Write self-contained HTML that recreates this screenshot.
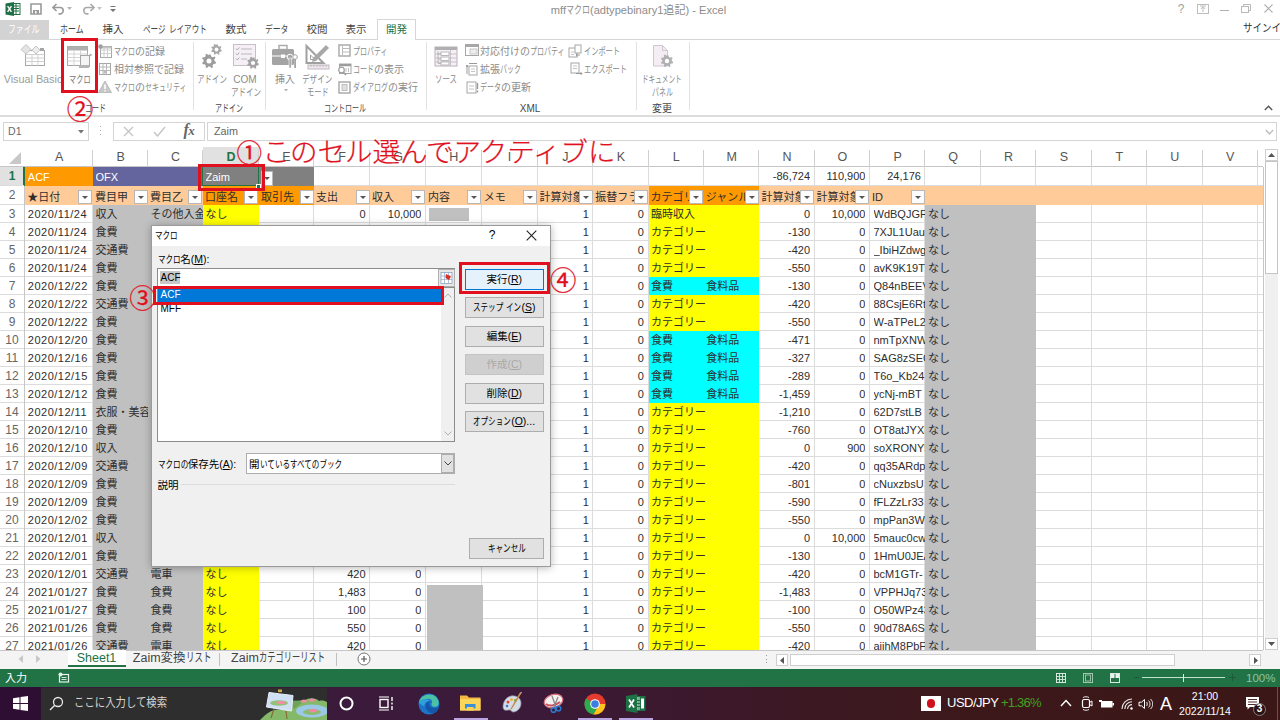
<!DOCTYPE html>
<html lang="ja"><head><meta charset="utf-8"><title>mffマクロ - Excel</title><style>
html,body{margin:0;padding:0}
body{width:1280px;height:720px;overflow:hidden;background:#fff;position:relative;font-family:"Liberation Sans","Noto Sans CJK JP",sans-serif;font-size:11px}
#r{position:absolute;left:0;top:0;width:1280px;height:720px;overflow:hidden}
#r div,#r svg{position:absolute}
#r div{white-space:nowrap}
.t{font-family:"Liberation Sans","Noto Sans CJK JP",sans-serif}
.k{display:inline-block;position:static!important;transform-origin:0 50%}
#r .k{position:static}
.c{overflow:hidden;line-height:18px;font-size:11px;color:#2e2e2e}
.c.r{text-align:right}
.c.d{letter-spacing:.5px}
.c.j{font-size:11px}
.ch{height:20px;line-height:20px;text-align:center;font-size:12.5px;color:#555}
.rh{left:0;width:24px;text-align:center;font-size:12px;color:#666}
.fb{background:#fdfdfd;border:1px solid #b8b8b8;box-sizing:border-box}
.fb i{position:absolute;left:50%;top:50%;margin:-1px 0 0 -3px;border:3px solid transparent;border-top:3.5px solid #555;border-bottom:none;width:0;height:0}
.an{color:#e0101e;font-family:"Noto Sans CJK JP",sans-serif;font-weight:300;-webkit-text-stroke:.25px #e0101e}
u{text-decoration:underline}
</style></head><body><div id="r">
<div style="left:0px;top:0px;width:1280px;height:20px;background:#fff"></div>
<svg style="left:5px;top:2px" width="16" height="14" viewBox="0 0 16 14"><rect x="6" y="1.5" width="9" height="11" fill="#fff" stroke="#1e7145" stroke-width="1"/><path d="M8 4h6M8 6.5h6M8 9h6M11 2v10" stroke="#1e7145" stroke-width="1"/><path d="M0.5 1.5L9 0v14L0.5 12.5Z" fill="#1e7145"/><path d="M2.6 4.2L6.4 9.8M6.4 4.2L2.6 9.8" stroke="#fff" stroke-width="1.4"/></svg>
<svg style="left:30px;top:3px" width="12" height="12" viewBox="0 0 12 12"><path d="M1 1h10v10H1Z" fill="none" stroke="#9a9a9a" stroke-width="1.6"/><rect x="3" y="7" width="6" height="4" fill="#9a9a9a"/><rect x="5" y="8" width="1.5" height="2.5" fill="#fff"/></svg>
<svg style="left:52px;top:3px" width="14" height="12" viewBox="0 0 14 12"><path d="M1.5 4.5h6.5a3.2 3.2 0 0 1 0 6.4H6.5" fill="none" stroke="#9a9a9a" stroke-width="1.6"/><path d="M4.5 1L1 4.5L4.5 8" fill="none" stroke="#9a9a9a" stroke-width="1.6"/></svg>
<svg style="left:67px;top:7px" width="5" height="3"><path d="M0 0h5L2.5 3Z" fill="#b5b5b5"/></svg>
<svg style="left:81px;top:3px" width="14" height="12" viewBox="0 0 14 12"><path d="M12.5 4.5H6a3.2 3.2 0 0 0 0 6.4h1.5" fill="none" stroke="#a9a9a9" stroke-width="1.6"/><path d="M9.5 1L13 4.5L9.5 8" fill="none" stroke="#a9a9a9" stroke-width="1.6"/></svg>
<svg style="left:97px;top:7px" width="5" height="3"><path d="M0 0h5L2.5 3Z" fill="#c5c5c5"/></svg>
<svg style="left:110px;top:6px" width="6" height="6"><path d="M0.5 0.5h5" stroke="#777" stroke-width="1"/><path d="M0 3h6L3 6Z" fill="#777"/></svg>
<div class="t" style="left:438.5px;top:1px;width:400px;height:18px;line-height:18px;text-align:center;color:#8c8c8c;font-size:11.1px">mff<span class="k" style="transform:scaleX(0.720);margin-right:-9.32px">マクロ</span>(adtypebinary1追記) - Excel</div>
<div class="t" style="left:1174px;top:1px;width:14px;height:16px;line-height:16px;text-align:center;color:#a0a0a0;font-size:12px">?</div>
<svg style="left:1197px;top:4px" width="12" height="10" viewBox="0 0 12 10"><rect x=".5" y=".5" width="11" height="9" fill="none" stroke="#bdbdbd"/><path d="M6 8V3M3.8 5L6 2.8L8.2 5M3 2h6" fill="none" stroke="#bdbdbd"/></svg>
<div style="left:1220px;top:10px;width:9px;height:1.2px;background:#b0b0b0"></div>
<svg style="left:1241px;top:4px" width="11" height="10" viewBox="0 0 11 10"><rect x=".5" y="2.5" width="7" height="6" fill="none" stroke="#b8b8b8"/><path d="M2.5 2.5V.5h7v6h-2" fill="none" stroke="#b8b8b8"/></svg>
<svg style="left:1264px;top:4px" width="9" height="9" viewBox="0 0 9 9"><path d="M.5 .5l8 8M8.5 .5l-8 8" stroke="#b0b0b0" stroke-width="1.1"/></svg>
<div style="left:0px;top:20px;width:1280px;height:19px;background:#fff"></div>
<div style="left:0px;top:38.5px;width:1280px;height:1px;background:#d6d6d6"></div>
<div style="left:0px;top:20px;width:48.5px;height:18.5px;background:#d3d3d3"></div>
<div class="t" style="left:0;top:20px;width:48px;height:18px;line-height:18px;text-align:center;color:#fff;font-size:10.5px"><span class="k" style="transform:scaleX(0.750);margin-right:-10.50px">ファイル</span></div>
<div class="t" style="left:54px;top:20px;width:36px;height:18px;line-height:18px;text-align:center;color:#444;font-size:10.5px"><span class="k" style="transform:scaleX(0.760);margin-right:-7.56px">ホーム</span></div>
<div class="t" style="left:96px;top:20px;width:34px;height:18px;line-height:18px;text-align:center;color:#444;font-size:10.5px">挿入</div>
<div class="t" style="left:137px;top:20px;width:76px;height:18px;line-height:18px;text-align:center;color:#444;font-size:10.5px"><span class="k" style="transform:scaleX(0.720);margin-right:-8.82px">ページ</span> <span class="k" style="transform:scaleX(0.720);margin-right:-14.70px">レイアウト</span></div>
<div class="t" style="left:219px;top:20px;width:34px;height:18px;line-height:18px;text-align:center;color:#444;font-size:10.5px">数式</div>
<div class="t" style="left:258px;top:20px;width:38px;height:18px;line-height:18px;text-align:center;color:#444;font-size:10.5px"><span class="k" style="transform:scaleX(0.740);margin-right:-8.19px">データ</span></div>
<div class="t" style="left:300px;top:20px;width:34px;height:18px;line-height:18px;text-align:center;color:#444;font-size:10.5px">校閲</div>
<div class="t" style="left:339px;top:20px;width:34px;height:18px;line-height:18px;text-align:center;color:#444;font-size:10.5px">表示</div>
<div style="left:377px;top:18.5px;width:38.5px;height:21px;background:#fff;border:1px solid #d6d6d6;border-bottom:none;box-sizing:border-box"></div>
<div class="t" style="left:379px;top:20px;width:35px;height:18px;line-height:18px;text-align:center;color:#217346;font-size:10.5px">開発</div>
<div class="t" style="left:1243px;top:20px;width:60px;height:17px;line-height:17px;color:#333;font-size:11px"><span class="k" style="transform:scaleX(0.860);margin-right:-7.70px">サインイン</span></div>
<div style="left:0px;top:39.5px;width:1280px;height:76px;background:#fff"></div>
<div style="left:0px;top:115px;width:1280px;height:1.5px;background:#dcdcdc"></div>
<div style="left:192.5px;top:42px;width:1px;height:68px;background:#e2e2e2"></div>
<div style="left:265px;top:42px;width:1px;height:68px;background:#e2e2e2"></div>
<div style="left:425.5px;top:42px;width:1px;height:68px;background:#e2e2e2"></div>
<div style="left:635.5px;top:42px;width:1px;height:68px;background:#e2e2e2"></div>
<div style="left:688.5px;top:42px;width:1px;height:68px;background:#e2e2e2"></div>
<div class="t" style="left:70px;top:101.5px;height:14px;line-height:14px;color:#484848;font-size:10px;width:50px;text-align:center;"><span class="k" style="transform:scaleX(0.700);margin-right:-9.00px">コード</span></div>
<div class="t" style="left:204px;top:101.5px;height:14px;line-height:14px;color:#484848;font-size:10px;width:50px;text-align:center;"><span class="k" style="transform:scaleX(0.700);margin-right:-12.00px">アドイン</span></div>
<div class="t" style="left:310px;top:101.5px;height:14px;line-height:14px;color:#484848;font-size:10px;width:70px;text-align:center;"><span class="k" style="transform:scaleX(0.700);margin-right:-18.00px">コントロール</span></div>
<div class="t" style="left:505px;top:101.5px;height:14px;line-height:14px;color:#484848;font-size:10px;width:50px;text-align:center;">XML</div>
<div class="t" style="left:637px;top:101.5px;height:14px;line-height:14px;color:#484848;font-size:10px;width:50px;text-align:center;">変更</div>
<svg style="left:20px;top:43px" width="27" height="25" viewBox="0 0 27 25"><rect x="5.500" y="7.500" width="19" height="15" fill="#fff" stroke="#a6a6a6"/><path d="M5.500 11.500h19M5.500 15h19M5.500 18.500h19M12 11.500v11M18 11.500v11" stroke="#d0d0d0"/><rect x="20" y="5" width="4" height="3" fill="#a6a6a6"/><path d="M6 1.500l5 5-5 4.500-5-4.500Z" fill="#e4e4e4" stroke="#c4c4c4"/><path d="M16 3l4 4-4 4-4-4Z" fill="#ececec" stroke="#c4c4c4"/></svg>
<div class="t" style="left:3px;top:72px;height:14px;line-height:14px;color:#9a9a9a;font-size:10.8px;width:60px;text-align:center;">Visual Basic</div>
<svg style="left:66px;top:45px" width="27" height="25" viewBox="0 0 27 25"><rect x="1.500" y="1.500" width="20" height="19" fill="#fff" stroke="#a6a6a6"/><rect x="1.500" y="1.500" width="20" height="4" fill="#b0b0b0"/><path d="M1.500 9h20M1.500 12.500h20M1.500 16h20M8 5.500v15M14.500 5.500v15" stroke="#d4d4d4"/><rect x="14.500" y="10.500" width="9" height="11" fill="#f4f4f4" stroke="#a6a6a6"/><rect x="13" y="20" width="10" height="3" fill="#b4b4b4"/><circle cx="24.500" cy="10" r="1.300" fill="#b4b4b4"/></svg>
<div class="t" style="left:62px;top:72.5px;height:14px;line-height:14px;color:#777;font-size:10px;width:36px;text-align:center;"><span class="k" style="transform:scaleX(0.720);margin-right:-8.40px">マクロ</span></div>
<svg style="left:98px;top:44px" width="14" height="14" viewBox="0 0 14 14"><rect x="2.500" y="2.500" width="11" height="11" fill="#fff" stroke="#a6a6a6"/><path d="M2.500 6h11M2.500 9.500h11M6 2.500v11M9.500 2.500v11" stroke="#d0d0d0"/><rect x="2.500" y="2.500" width="11" height="2" fill="#c4c4c4"/><circle cx="2.500" cy="2.500" r="2.300" fill="#a0a0a0"/></svg>
<div class="t" style="left:114px;top:45px;height:14px;line-height:14px;color:#8a8a8a;font-size:10px;"><span class="k" style="transform:scaleX(0.700);margin-right:-9.00px">マクロ</span>の記録</div>
<svg style="left:98px;top:62px" width="14" height="14" viewBox="0 0 14 14"><rect x="1.500" y="1.500" width="11" height="11" fill="#fff" stroke="#a6a6a6"/><path d="M1.500 5h11M1.500 8.500h11M5 1.500v11M8.500 1.500v11" stroke="#b8b8b8"/><rect x="5.500" y="8.500" width="3" height="3" fill="#bbb"/></svg>
<div class="t" style="left:114px;top:63px;height:14px;line-height:14px;color:#8a8a8a;font-size:10px;">相対参照で記録</div>
<svg style="left:98px;top:80px" width="14" height="13" viewBox="0 0 14 13"><path d="M7 1L13.500 12.500H.5Z" fill="#c8c8c8" stroke="#bcbcbc"/><path d="M7 4.500v4.500M7 10.200v1.400" stroke="#fff" stroke-width="1.600"/></svg>
<div class="t" style="left:114px;top:81px;height:14px;line-height:14px;color:#8a8a8a;font-size:10px;"><span class="k" style="transform:scaleX(0.700);margin-right:-9.00px">マクロ</span>の<span class="k" style="transform:scaleX(0.700);margin-right:-18.00px">セキュリティ</span></div>
<svg style="left:200px;top:43px" width="28" height="28" viewBox="0 0 28 28"><g transform="translate(9,18) scale(1.25)"><path d="M0 -5.200L1.300 -5.200L1.700 -3.700L3 -3L4.400 -3.700L5.200 -2.600L4.200 -1.400L4.400 0L5.600 .8L5.200 2.200L3.700 2.300L2.800 3.400L3.200 4.900L1.900 5.500L.9 4.300L-.6 4.300L-1.500 5.500L-2.800 5L-2.500 3.500L-3.500 2.500L-5 2.600L-5.500 1.300L-4.300 .4L-4.300 -1L-5.500 -1.900L-5 -3.100L-3.500 -3L-2.600 -4L-2.900 -5.400L-1.600 -5.900L-.700 -4.700Z" fill="#9c9c9c"/><circle r="2" fill="#fff"/></g><g transform="translate(16.5,6.5) scale(.95)"><path d="M0 -5.200L1.300 -5.200L1.700 -3.700L3 -3L4.400 -3.700L5.200 -2.600L4.200 -1.400L4.400 0L5.600 .8L5.200 2.200L3.700 2.300L2.800 3.400L3.200 4.900L1.900 5.500L.9 4.300L-.6 4.300L-1.500 5.500L-2.800 5L-2.500 3.500L-3.500 2.500L-5 2.600L-5.500 1.300L-4.300 .4L-4.300 -1L-5.500 -1.900L-5 -3.100L-3.500 -3L-2.600 -4L-2.900 -5.400L-1.600 -5.900L-.700 -4.700Z" fill="#a8a8a8"/><circle r="2" fill="#fff"/></g></svg>
<div class="t" style="left:194px;top:72.5px;height:14px;line-height:14px;color:#8a8a8a;font-size:10px;width:36px;text-align:center;"><span class="k" style="transform:scaleX(0.750);margin-right:-10.00px">アドイン</span></div>
<svg style="left:232px;top:43px" width="28" height="28" viewBox="0 0 28 28"><rect x="1.500" y="1.500" width="22" height="21" fill="#f6f0f6" stroke="#c8c0c8"/><path d="M9 6h11M9 11h11M9 16h6" stroke="#b8b8b8"/><path d="M4 5.500l1.300 1.500 2-2.500M4 10.500l1.300 1.500 2-2.500M4 15.500l1.300 1.500 2-2.500" fill="none" stroke="#aaa"/><g transform="translate(21,20) scale(1.05)"><path d="M0 -5.200L1.300 -5.200L1.700 -3.700L3 -3L4.400 -3.700L5.200 -2.600L4.200 -1.400L4.400 0L5.600 .8L5.200 2.200L3.700 2.300L2.800 3.400L3.200 4.900L1.900 5.500L.9 4.300L-.6 4.300L-1.500 5.500L-2.800 5L-2.500 3.500L-3.500 2.500L-5 2.600L-5.500 1.300L-4.300 .4L-4.300 -1L-5.500 -1.900L-5 -3.100L-3.500 -3L-2.600 -4L-2.900 -5.400L-1.600 -5.900L-.700 -4.700Z" fill="#a4a4a4"/><circle r="2" fill="#fff"/></g></svg>
<div class="t" style="left:229px;top:72.5px;height:14px;line-height:14px;color:#8a8a8a;font-size:10px;width:32px;text-align:center;">COM</div>
<div class="t" style="left:227.5px;top:85.5px;height:14px;line-height:14px;color:#8a8a8a;font-size:10px;width:36px;text-align:center;"><span class="k" style="transform:scaleX(0.750);margin-right:-10.00px">アドイン</span></div>
<svg style="left:271px;top:44px" width="28" height="26" viewBox="0 0 28 26"><rect x="8" y="1.500" width="8" height="4" fill="none" stroke="#a8a8a8" stroke-width="1.400"/><rect x="1" y="5" width="22" height="16" rx="1.500" fill="#a4a4a4"/><path d="M1 12h22" stroke="#fff" stroke-width="1"/><rect x="10" y="10.500" width="4" height="3.500" fill="#fff"/><circle cx="19" cy="13" r="2.800" fill="#a4a4a4" stroke="#fff"/><rect x="18" y="14" width="2.200" height="10" fill="#a4a4a4" stroke="#fff" stroke-width=".6"/><circle cx="24" cy="13" r="2.300" fill="#fff" stroke="#a4a4a4"/><rect x="23.200" y="15" width="1.800" height="9" fill="#a4a4a4"/></svg>
<div class="t" style="left:268px;top:72.5px;height:14px;line-height:14px;color:#8a8a8a;font-size:10px;width:34px;text-align:center;">挿入</div>
<svg style="left:284px;top:89px" width="4" height="3"><path d="M0 0h4L2 2.500Z" fill="#b0b0b0"/></svg>
<svg style="left:304px;top:43px" width="28" height="28" viewBox="0 0 28 28"><path d="M2.500 3v17h17Z" fill="none" stroke="#a0a0a0" stroke-width="2"/><path d="M6.500 12v4.500H11Z" fill="#fff" stroke="#a0a0a0"/><path d="M22 2l3 3L12 18l-4 1 1-4Z" fill="#a8a8a8"/><rect x="4" y="22" width="21" height="4" fill="#efe8ef" stroke="#c0b8c0"/><path d="M7 22v2M10 22v2M13 22v2M16 22v2M19 22v2M22 22v2" stroke="#b0b0b0" stroke-width=".8"/></svg>
<div class="t" style="left:299.5px;top:72.5px;height:14px;line-height:14px;color:#8a8a8a;font-size:10px;width:36px;text-align:center;"><span class="k" style="transform:scaleX(0.760);margin-right:-9.60px">デザイン</span></div>
<div class="t" style="left:300px;top:85.5px;height:14px;line-height:14px;color:#8a8a8a;font-size:10px;width:36px;text-align:center;"><span class="k" style="transform:scaleX(0.720);margin-right:-8.40px">モード</span></div>
<svg style="left:338px;top:44px" width="13" height="13" viewBox="0 0 13 13"><rect x="1" y="1" width="11" height="11" fill="#fff" stroke="#a6a6a6" stroke-width="1.400"/><path d="M4.500 1v11M4.500 4.500H12M4.500 8H12" stroke="#bbb"/></svg>
<div class="t" style="left:353px;top:45px;height:14px;line-height:14px;color:#8a8a8a;font-size:10px;"><span class="k" style="transform:scaleX(0.700);margin-right:-15.00px">プロパティ</span></div>
<svg style="left:337px;top:63px" width="15" height="13" viewBox="0 0 15 13"><rect x="2.500" y="1" width="11.500" height="9.500" fill="#fff" stroke="#a6a6a6"/><rect x="2.500" y="1" width="11.500" height="2.200" fill="#9c9c9c"/><path d="M9 5v4M11.500 5v4" stroke="#c0c0c0"/><circle cx="4.500" cy="7" r="2.800" fill="#fff" stroke="#9c9c9c" stroke-width="1.200"/><path d="M6.500 9.200L9 12" stroke="#9c9c9c" stroke-width="1.500"/></svg>
<div class="t" style="left:353px;top:63px;height:14px;line-height:14px;color:#8a8a8a;font-size:10px;"><span class="k" style="transform:scaleX(0.700);margin-right:-9.00px">コード</span>の表示</div>
<svg style="left:338px;top:81px" width="13" height="13" viewBox="0 0 13 13"><rect x="1" y="1" width="11" height="11" fill="#fff" stroke="#a6a6a6" stroke-width="1.400"/><rect x="4" y="3.500" width="5" height="6" fill="#e0e0e0" stroke="#b4b4b4" stroke-width=".8"/></svg>
<div class="t" style="left:353px;top:81px;height:14px;line-height:14px;color:#8a8a8a;font-size:10px;"><span class="k" style="transform:scaleX(0.700);margin-right:-15.00px">ダイアログ</span>の実行</div>
<svg style="left:434px;top:46px" width="24" height="21" viewBox="0 0 24 21"><rect x="1" y="1" width="22" height="19" fill="#f6f0f6" stroke="#b8b0b8"/><rect x="1" y="1" width="22" height="3" fill="#b0b0b0"/><path d="M1 8h22M1 12h22M1 16h22M16.500 4v16" stroke="#c8c0c8"/><rect x="7" y="6" width="8" height="3.500" fill="#fff" stroke="#aaa" stroke-width=".8"/><rect x="7" y="11" width="8" height="3.500" fill="#fff" stroke="#aaa" stroke-width=".8"/><rect x="7" y="16" width="8" height="3" fill="#fff" stroke="#aaa" stroke-width=".8"/><path d="M4 5v12.500h3M4 8h3M4 13h3" fill="none" stroke="#aaa" stroke-width=".8"/></svg>
<div class="t" style="left:428px;top:72.5px;height:14px;line-height:14px;color:#8a8a8a;font-size:10px;width:36px;text-align:center;"><span class="k" style="transform:scaleX(0.740);margin-right:-7.80px">ソース</span></div>
<svg style="left:465px;top:44px" width="14" height="12" viewBox="0 0 14 12"><rect x=".5" y=".5" width="13" height="11" fill="#fff" stroke="#a6a6a6"/><rect x=".5" y=".5" width="13" height="2.500" fill="#a8a8a8"/><rect x="5" y="5" width="7" height="5" fill="#eee" stroke="#bbb" stroke-width=".8"/></svg>
<div class="t" style="left:480px;top:45px;height:14px;line-height:14px;color:#8a8a8a;font-size:10px;">対応付けの<span class="k" style="transform:scaleX(0.700);margin-right:-15.00px">プロパティ</span></div>
<svg style="left:466px;top:62px" width="13" height="14" viewBox="0 0 13 14"><rect x="3" y="4" width="8" height="9" fill="#fff" stroke="#a6a6a6"/><path d="M1 3v9M1 3l-1 2M1 3l1 2M3 1.500h8" stroke="#999" stroke-width="1"/><path d="M5 7h4M5 9.500h4" stroke="#c4c4c4"/></svg>
<div class="t" style="left:480px;top:63px;height:14px;line-height:14px;color:#8a8a8a;font-size:10px;">拡張<span class="k" style="transform:scaleX(0.700);margin-right:-9.00px">パック</span></div>
<svg style="left:466px;top:80px" width="13" height="14" viewBox="0 0 13 14"><rect x="1" y="2" width="9" height="11" fill="#fff" stroke="#a6a6a6"/><path d="M3 6h5M3 9h5" stroke="#c4c4c4"/><path d="M11.500 3v6M11.500 10.500v2" stroke="#999" stroke-width="1.400"/></svg>
<div class="t" style="left:480px;top:81px;height:14px;line-height:14px;color:#8a8a8a;font-size:10px;"><span class="k" style="transform:scaleX(0.700);margin-right:-9.00px">データ</span>の更新</div>
<svg style="left:568px;top:44px" width="14" height="14" viewBox="0 0 14 14"><rect x="1" y="4" width="8" height="9" fill="#fff" stroke="#a6a6a6"/><rect x="7" y="1" width="6" height="8" fill="#fff" stroke="#a6a6a6"/><path d="M3 8h3M3 10.500h3" stroke="#c4c4c4"/><path d="M12 11H8M9.500 9.500L8 11l1.500 1.500" fill="none" stroke="#999"/></svg>
<div class="t" style="left:584px;top:45px;height:14px;line-height:14px;color:#8a8a8a;font-size:10px;"><span class="k" style="transform:scaleX(0.720);margin-right:-14.00px">インポート</span></div>
<svg style="left:570px;top:62px" width="14" height="14" viewBox="0 0 14 14"><rect x="1" y="1" width="8" height="10" fill="#fff" stroke="#a6a6a6"/><path d="M3 4h4M3 6.500h4" stroke="#c4c4c4"/><path d="M6 11.500h6M10.500 10l1.500 1.500-1.500 1.500" fill="none" stroke="#999"/></svg>
<div class="t" style="left:584px;top:63px;height:14px;line-height:14px;color:#8a8a8a;font-size:10px;"><span class="k" style="transform:scaleX(0.720);margin-right:-16.80px">エクスポート</span></div>
<svg style="left:652px;top:44px" width="22" height="26" viewBox="0 0 22 26"><path d="M1.500 1.500h9l5 5V22h-14Z" fill="#f4eef4" stroke="#cfc6cf"/><path d="M10.500 1.500v5h5" fill="none" stroke="#cfc6cf"/><g transform="translate(15,17) scale(1.1)"><path d="M0 -5.200L1.300 -5.200L1.700 -3.700L3 -3L4.400 -3.700L5.200 -2.600L4.200 -1.400L4.400 0L5.600 .8L5.200 2.200L3.700 2.300L2.800 3.400L3.200 4.900L1.900 5.500L.9 4.300L-.6 4.300L-1.500 5.500L-2.800 5L-2.500 3.500L-3.500 2.500L-5 2.600L-5.500 1.300L-4.300 .4L-4.300 -1L-5.500 -1.900L-5 -3.100L-3.500 -3L-2.600 -4L-2.900 -5.400L-1.600 -5.900L-.700 -4.700Z" fill="#b0b0b0"/><circle r="2" fill="#fff"/></g></svg>
<div class="t" style="left:637px;top:72.5px;height:14px;line-height:14px;color:#8a8a8a;font-size:10px;width:50px;text-align:center;"><span class="k" style="transform:scaleX(0.660);margin-right:-20.40px">ドキュメント</span></div>
<div class="t" style="left:642px;top:85.5px;height:14px;line-height:14px;color:#8a8a8a;font-size:10px;width:40px;text-align:center;"><span class="k" style="transform:scaleX(0.700);margin-right:-9.00px">パネル</span></div>
<svg style="left:1264px;top:105px" width="9" height="6"><path d="M.8 5L4.500 1.200L8.200 5" fill="none" stroke="#555" stroke-width="1.300"/></svg>
<div style="left:0px;top:116.5px;width:1280px;height:30.5px;background:#fff"></div>
<div style="left:3px;top:122px;width:85.5px;height:18.5px;background:#fff;border:1px solid #d4d4d4;box-sizing:border-box"></div>
<div class="t" style="left:8px;top:123px;height:17px;line-height:17px;color:#6a6a6a;font-size:10.6px">D1</div>
<svg style="left:78px;top:129.500px" width="6" height="4"><path d="M0 0h6L3 3.500Z" fill="#777"/></svg>
<div style="left:100px;top:126px;width:1.2px;height:1.2px;background:#aaa"></div>
<div style="left:100px;top:130px;width:1.2px;height:1.2px;background:#aaa"></div>
<div style="left:100px;top:134px;width:1.2px;height:1.2px;background:#aaa"></div>
<div style="left:113px;top:122px;width:91.5px;height:18.5px;background:#fff;border:1px solid #d4d4d4;box-sizing:border-box"></div>
<svg style="left:123px;top:126px" width="11" height="11"><path d="M1 1l9 9M10 1l-9 9" stroke="#c4c4c4" stroke-width="1.300"/></svg>
<svg style="left:153px;top:126px" width="13" height="11"><path d="M1 6l3.500 4L12 1" fill="none" stroke="#c4c4c4" stroke-width="1.400"/></svg>
<div style="left:183.5px;top:121px;height:19px;line-height:19px;color:#666;font:italic bold 16px 'Liberation Serif',serif;"><span style="letter-spacing:-.5px">f</span><span style="font-size:13px">x</span></div>
<div style="left:207px;top:122px;width:1070px;height:18.5px;background:#fff;border:1px solid #d4d4d4;box-sizing:border-box"></div>
<div class="t" style="left:214px;top:123px;height:17px;line-height:17px;color:#666;font-size:10.8px">Zaim</div>
<svg style="left:1265px;top:129px" width="9" height="6"><path d="M.8 1L4.500 4.800L8.200 1" fill="none" stroke="#c0c0c0" stroke-width="1.500"/></svg>
<div style="left:0px;top:147px;width:1263px;height:503px;background:#fff"></div>
<div style="left:92px;top:167px;width:1px;height:483px;background:#dcdcdc"></div>
<div style="left:147.1px;top:167px;width:1px;height:483px;background:#dcdcdc"></div>
<div style="left:202px;top:167px;width:1px;height:483px;background:#dcdcdc"></div>
<div style="left:257.9px;top:167px;width:1px;height:483px;background:#dcdcdc"></div>
<div style="left:313.1px;top:167px;width:1px;height:483px;background:#dcdcdc"></div>
<div style="left:369.1px;top:167px;width:1px;height:483px;background:#dcdcdc"></div>
<div style="left:425px;top:167px;width:1px;height:483px;background:#dcdcdc"></div>
<div style="left:480.7px;top:167px;width:1px;height:483px;background:#dcdcdc"></div>
<div style="left:536.5px;top:167px;width:1px;height:483px;background:#dcdcdc"></div>
<div style="left:592.3px;top:167px;width:1px;height:483px;background:#dcdcdc"></div>
<div style="left:647.5px;top:167px;width:1px;height:483px;background:#dcdcdc"></div>
<div style="left:702.8px;top:167px;width:1px;height:483px;background:#dcdcdc"></div>
<div style="left:758.4px;top:167px;width:1px;height:483px;background:#dcdcdc"></div>
<div style="left:813.6px;top:167px;width:1px;height:483px;background:#dcdcdc"></div>
<div style="left:869px;top:167px;width:1px;height:483px;background:#dcdcdc"></div>
<div style="left:924.4px;top:167px;width:1px;height:483px;background:#dcdcdc"></div>
<div style="left:979.8px;top:167px;width:1px;height:483px;background:#dcdcdc"></div>
<div style="left:1035.2px;top:167px;width:1px;height:483px;background:#dcdcdc"></div>
<div style="left:1090.5px;top:167px;width:1px;height:483px;background:#dcdcdc"></div>
<div style="left:1146px;top:167px;width:1px;height:483px;background:#dcdcdc"></div>
<div style="left:1201.5px;top:167px;width:1px;height:483px;background:#dcdcdc"></div>
<div style="left:1256.8px;top:167px;width:1px;height:483px;background:#dcdcdc"></div>
<div style="left:25px;top:185px;width:1238px;height:1px;background:#dcdcdc"></div>
<div style="left:25px;top:203.9px;width:1238px;height:1px;background:#dcdcdc"></div>
<div style="left:25px;top:221.9px;width:1238px;height:1px;background:#dcdcdc"></div>
<div style="left:25px;top:239.9px;width:1238px;height:1px;background:#dcdcdc"></div>
<div style="left:25px;top:257.9px;width:1238px;height:1px;background:#dcdcdc"></div>
<div style="left:25px;top:275.9px;width:1238px;height:1px;background:#dcdcdc"></div>
<div style="left:25px;top:293.9px;width:1238px;height:1px;background:#dcdcdc"></div>
<div style="left:25px;top:311.9px;width:1238px;height:1px;background:#dcdcdc"></div>
<div style="left:25px;top:329.9px;width:1238px;height:1px;background:#dcdcdc"></div>
<div style="left:25px;top:347.9px;width:1238px;height:1px;background:#dcdcdc"></div>
<div style="left:25px;top:365.9px;width:1238px;height:1px;background:#dcdcdc"></div>
<div style="left:25px;top:383.9px;width:1238px;height:1px;background:#dcdcdc"></div>
<div style="left:25px;top:401.9px;width:1238px;height:1px;background:#dcdcdc"></div>
<div style="left:25px;top:419.9px;width:1238px;height:1px;background:#dcdcdc"></div>
<div style="left:25px;top:437.9px;width:1238px;height:1px;background:#dcdcdc"></div>
<div style="left:25px;top:455.9px;width:1238px;height:1px;background:#dcdcdc"></div>
<div style="left:25px;top:473.9px;width:1238px;height:1px;background:#dcdcdc"></div>
<div style="left:25px;top:491.9px;width:1238px;height:1px;background:#dcdcdc"></div>
<div style="left:25px;top:509.9px;width:1238px;height:1px;background:#dcdcdc"></div>
<div style="left:25px;top:527.9px;width:1238px;height:1px;background:#dcdcdc"></div>
<div style="left:25px;top:545.9px;width:1238px;height:1px;background:#dcdcdc"></div>
<div style="left:25px;top:563.9px;width:1238px;height:1px;background:#dcdcdc"></div>
<div style="left:25px;top:581.9px;width:1238px;height:1px;background:#dcdcdc"></div>
<div style="left:25px;top:599.9px;width:1238px;height:1px;background:#dcdcdc"></div>
<div style="left:25px;top:617.9px;width:1238px;height:1px;background:#dcdcdc"></div>
<div style="left:25px;top:635.9px;width:1238px;height:1px;background:#dcdcdc"></div>
<div style="left:25.3px;top:167px;width:67.7px;height:19px;background:#ff9900"></div>
<div style="left:93px;top:167px;width:110px;height:19px;background:#64649e"></div>
<div style="left:203px;top:167px;width:111.1px;height:19px;background:#808080"></div>
<div style="left:25px;top:186.3px;width:1238px;height:18.7px;background:#ffcc99"></div>
<div style="left:203px;top:186.3px;width:111.1px;height:18.6px;background:#ff9900"></div>
<div style="left:648.5px;top:186.3px;width:110.9px;height:18.6px;background:#ff9900"></div>
<div style="left:93px;top:204.9px;width:110px;height:445.1px;background:#c0c0c0"></div>
<div style="left:203px;top:204.9px;width:55.9px;height:445.1px;background:#ffff00"></div>
<div style="left:648.5px;top:204.9px;width:110.9px;height:445.1px;background:#ffff00"></div>
<div style="left:648.5px;top:276.9px;width:110.9px;height:18px;background:#00ffff"></div>
<div style="left:648.5px;top:330.9px;width:110.9px;height:18px;background:#00ffff"></div>
<div style="left:648.5px;top:348.9px;width:110.9px;height:18px;background:#00ffff"></div>
<div style="left:648.5px;top:366.9px;width:110.9px;height:18px;background:#00ffff"></div>
<div style="left:648.5px;top:384.9px;width:110.9px;height:18px;background:#00ffff"></div>
<div style="left:925.4px;top:204.9px;width:110.8px;height:445.1px;background:#c0c0c0"></div>
<div style="left:428.5px;top:207.5px;width:40px;height:13.5px;background:#c0c0c0"></div>
<div style="left:427px;top:585px;width:55.8px;height:65px;background:#c0c0c0"></div>
<div class="c l" style="left:27.8px;top:167px;width:65.2px;height:19px;color:#fff;line-height:20px">ACF</div>
<div class="c l" style="left:95.5px;top:167px;width:52.6px;height:19px;color:#fff;line-height:20px">OFX</div>
<div class="c l" style="left:205.5px;top:167px;width:53.4px;height:19px;color:#fff;line-height:20px">Zaim</div>
<div class="c r" style="left:761.9px;top:167px;width:48.2px;height:19px;">-86,724</div>
<div class="c r" style="left:817.1px;top:167px;width:48.4px;height:19px;">110,900</div>
<div class="c r" style="left:872.5px;top:167px;width:48.4px;height:19px;">24,176</div>
<div class="c j" style="left:27.3px;top:186.3px;width:51.1px;height:18.7px;line-height:22px">★日付</div>
<div class="fb" style="left:78.4px;top:190.3px;width:14px;height:13.4px"><i></i></div>
<div class="c j" style="left:95px;top:186.3px;width:38.5px;height:18.7px;line-height:22px">費目甲</div>
<div class="fb" style="left:133.5px;top:190.3px;width:14px;height:13.4px"><i></i></div>
<div class="c j" style="left:150.1px;top:186.3px;width:38.3px;height:18.7px;line-height:22px">費目乙</div>
<div class="fb" style="left:188.4px;top:190.3px;width:14px;height:13.4px"><i></i></div>
<div class="c j" style="left:205px;top:186.3px;width:39.3px;height:18.7px;line-height:22px">口座名</div>
<div class="fb" style="left:244.3px;top:190.3px;width:14px;height:13.4px"><i></i></div>
<div class="c j" style="left:260.9px;top:186.3px;width:38.6px;height:18.7px;line-height:22px">取引先</div>
<div class="fb" style="left:299.5px;top:190.3px;width:14px;height:13.4px"><i></i></div>
<div class="c j" style="left:316.1px;top:186.3px;width:39.4px;height:18.7px;line-height:22px">支出</div>
<div class="fb" style="left:355.5px;top:190.3px;width:14px;height:13.4px"><i></i></div>
<div class="c j" style="left:372.1px;top:186.3px;width:39.3px;height:18.7px;line-height:22px">収入</div>
<div class="fb" style="left:411.4px;top:190.3px;width:14px;height:13.4px"><i></i></div>
<div class="c j" style="left:428px;top:186.3px;width:39.1px;height:18.7px;line-height:22px">内容</div>
<div class="fb" style="left:467.1px;top:190.3px;width:14px;height:13.4px"><i></i></div>
<div class="c j" style="left:483.7px;top:186.3px;width:39.2px;height:18.7px;line-height:22px">メモ</div>
<div class="fb" style="left:522.9px;top:190.3px;width:14px;height:13.4px"><i></i></div>
<div class="c j" style="left:539.5px;top:186.3px;width:39.2px;height:18.7px;line-height:22px">計算対象</div>
<div class="fb" style="left:578.7px;top:190.3px;width:14px;height:13.4px"><i></i></div>
<div class="c j" style="left:595.3px;top:186.3px;width:38.6px;height:18.7px;line-height:22px">振替フラグ</div>
<div class="fb" style="left:633.9px;top:190.3px;width:14px;height:13.4px"><i></i></div>
<div class="c j" style="left:650.5px;top:186.3px;width:38.7px;height:18.7px;line-height:22px">カテゴリ</div>
<div class="fb" style="left:689.2px;top:190.3px;width:14px;height:13.4px"><i></i></div>
<div class="c j" style="left:705.8px;top:186.3px;width:39px;height:18.7px;line-height:22px">ジャンル</div>
<div class="fb" style="left:744.8px;top:190.3px;width:14px;height:13.4px"><i></i></div>
<div class="c j" style="left:761.4px;top:186.3px;width:38.6px;height:18.7px;line-height:22px">計算対象</div>
<div class="fb" style="left:800px;top:190.3px;width:14px;height:13.4px"><i></i></div>
<div class="c j" style="left:816.6px;top:186.3px;width:38.8px;height:18.7px;line-height:22px">計算対象</div>
<div class="fb" style="left:855.4px;top:190.3px;width:14px;height:13.4px"><i></i></div>
<div class="c j" style="left:872px;top:186.3px;width:38.8px;height:18.7px;line-height:22px">ID</div>
<div class="fb" style="left:910.8px;top:190.3px;width:14px;height:13.4px"><i></i></div>
<div class="fb" style="left:260.7px;top:170.8px;width:12.3px;height:14.8px"><i></i></div>
<div class="c l d" style="left:27.8px;top:204.9px;width:65.2px;height:18px;">2020/11/24</div>
<div class="c j" style="left:95.5px;top:204.9px;width:52.6px;height:18px;">収入</div>
<div class="c j" style="left:150.6px;top:204.9px;width:52.4px;height:18px;">その他入金</div>
<div class="c j" style="left:205.5px;top:204.9px;width:53.4px;height:18px;">なし</div>
<div class="c r" style="left:316.6px;top:204.9px;width:49px;height:18px;">0</div>
<div class="c r" style="left:372.6px;top:204.9px;width:48.9px;height:18px;">10,000</div>
<div class="c r" style="left:540px;top:204.9px;width:48.8px;height:18px;">1</div>
<div class="c r" style="left:595.8px;top:204.9px;width:48.2px;height:18px;">0</div>
<div class="c j" style="left:651px;top:204.9px;width:52.8px;height:18px;">臨時収入</div>
<div class="c r" style="left:761.9px;top:204.9px;width:48.2px;height:18px;">0</div>
<div class="c r" style="left:817.1px;top:204.9px;width:48.4px;height:18px;">10,000</div>
<div class="c l" style="left:873.5px;top:204.9px;width:51.9px;height:18px;">WdBQJGFx</div>
<div class="c j" style="left:927.9px;top:204.9px;width:52.9px;height:18px;">なし</div>
<div class="c l d" style="left:27.8px;top:222.9px;width:65.2px;height:18px;">2020/11/24</div>
<div class="c j" style="left:95.5px;top:222.9px;width:52.6px;height:18px;">食費</div>
<div class="c r" style="left:540px;top:222.9px;width:48.8px;height:18px;">1</div>
<div class="c r" style="left:595.8px;top:222.9px;width:48.2px;height:18px;">0</div>
<div class="c j" style="left:651px;top:222.9px;width:108.4px;height:18px;">カテゴリー</div>
<div class="c r" style="left:761.9px;top:222.9px;width:48.2px;height:18px;">-130</div>
<div class="c r" style="left:817.1px;top:222.9px;width:48.4px;height:18px;">0</div>
<div class="c l" style="left:873.5px;top:222.9px;width:51.9px;height:18px;">7XJL1Uau</div>
<div class="c j" style="left:927.9px;top:222.9px;width:52.9px;height:18px;">なし</div>
<div class="c l d" style="left:27.8px;top:240.9px;width:65.2px;height:18px;">2020/11/24</div>
<div class="c j" style="left:95.5px;top:240.9px;width:52.6px;height:18px;">交通費</div>
<div class="c r" style="left:540px;top:240.9px;width:48.8px;height:18px;">1</div>
<div class="c r" style="left:595.8px;top:240.9px;width:48.2px;height:18px;">0</div>
<div class="c j" style="left:651px;top:240.9px;width:108.4px;height:18px;">カテゴリー</div>
<div class="c r" style="left:761.9px;top:240.9px;width:48.2px;height:18px;">-420</div>
<div class="c r" style="left:817.1px;top:240.9px;width:48.4px;height:18px;">0</div>
<div class="c l" style="left:873.5px;top:240.9px;width:51.9px;height:18px;">_IbiHZdwg</div>
<div class="c j" style="left:927.9px;top:240.9px;width:52.9px;height:18px;">なし</div>
<div class="c l d" style="left:27.8px;top:258.9px;width:65.2px;height:18px;">2020/11/24</div>
<div class="c j" style="left:95.5px;top:258.9px;width:52.6px;height:18px;">食費</div>
<div class="c r" style="left:540px;top:258.9px;width:48.8px;height:18px;">1</div>
<div class="c r" style="left:595.8px;top:258.9px;width:48.2px;height:18px;">0</div>
<div class="c j" style="left:651px;top:258.9px;width:108.4px;height:18px;">カテゴリー</div>
<div class="c r" style="left:761.9px;top:258.9px;width:48.2px;height:18px;">-550</div>
<div class="c r" style="left:817.1px;top:258.9px;width:48.4px;height:18px;">0</div>
<div class="c l" style="left:873.5px;top:258.9px;width:51.9px;height:18px;">avK9K19T</div>
<div class="c j" style="left:927.9px;top:258.9px;width:52.9px;height:18px;">なし</div>
<div class="c l d" style="left:27.8px;top:276.9px;width:65.2px;height:18px;">2020/12/22</div>
<div class="c j" style="left:95.5px;top:276.9px;width:52.6px;height:18px;">食費</div>
<div class="c r" style="left:540px;top:276.9px;width:48.8px;height:18px;">1</div>
<div class="c r" style="left:595.8px;top:276.9px;width:48.2px;height:18px;">0</div>
<div class="c j" style="left:651px;top:276.9px;width:52.8px;height:18px;">食費</div>
<div class="c j" style="left:706.3px;top:276.9px;width:53.1px;height:18px;">食料品</div>
<div class="c r" style="left:761.9px;top:276.9px;width:48.2px;height:18px;">-130</div>
<div class="c r" style="left:817.1px;top:276.9px;width:48.4px;height:18px;">0</div>
<div class="c l" style="left:873.5px;top:276.9px;width:51.9px;height:18px;">Q84nBEEV</div>
<div class="c j" style="left:927.9px;top:276.9px;width:52.9px;height:18px;">なし</div>
<div class="c l d" style="left:27.8px;top:294.9px;width:65.2px;height:18px;">2020/12/22</div>
<div class="c j" style="left:95.5px;top:294.9px;width:52.6px;height:18px;">交通費</div>
<div class="c r" style="left:540px;top:294.9px;width:48.8px;height:18px;">1</div>
<div class="c r" style="left:595.8px;top:294.9px;width:48.2px;height:18px;">0</div>
<div class="c j" style="left:651px;top:294.9px;width:108.4px;height:18px;">カテゴリー</div>
<div class="c r" style="left:761.9px;top:294.9px;width:48.2px;height:18px;">-420</div>
<div class="c r" style="left:817.1px;top:294.9px;width:48.4px;height:18px;">0</div>
<div class="c l" style="left:873.5px;top:294.9px;width:51.9px;height:18px;">88CsjE6Rt</div>
<div class="c j" style="left:927.9px;top:294.9px;width:52.9px;height:18px;">なし</div>
<div class="c l d" style="left:27.8px;top:312.9px;width:65.2px;height:18px;">2020/12/22</div>
<div class="c j" style="left:95.5px;top:312.9px;width:52.6px;height:18px;">食費</div>
<div class="c r" style="left:540px;top:312.9px;width:48.8px;height:18px;">1</div>
<div class="c r" style="left:595.8px;top:312.9px;width:48.2px;height:18px;">0</div>
<div class="c j" style="left:651px;top:312.9px;width:108.4px;height:18px;">カテゴリー</div>
<div class="c r" style="left:761.9px;top:312.9px;width:48.2px;height:18px;">-550</div>
<div class="c r" style="left:817.1px;top:312.9px;width:48.4px;height:18px;">0</div>
<div class="c l" style="left:873.5px;top:312.9px;width:51.9px;height:18px;">W-aTPeL2</div>
<div class="c j" style="left:927.9px;top:312.9px;width:52.9px;height:18px;">なし</div>
<div class="c l d" style="left:27.8px;top:330.9px;width:65.2px;height:18px;">2020/12/20</div>
<div class="c j" style="left:95.5px;top:330.9px;width:52.6px;height:18px;">食費</div>
<div class="c r" style="left:540px;top:330.9px;width:48.8px;height:18px;">1</div>
<div class="c r" style="left:595.8px;top:330.9px;width:48.2px;height:18px;">0</div>
<div class="c j" style="left:651px;top:330.9px;width:52.8px;height:18px;">食費</div>
<div class="c j" style="left:706.3px;top:330.9px;width:53.1px;height:18px;">食料品</div>
<div class="c r" style="left:761.9px;top:330.9px;width:48.2px;height:18px;">-471</div>
<div class="c r" style="left:817.1px;top:330.9px;width:48.4px;height:18px;">0</div>
<div class="c l" style="left:873.5px;top:330.9px;width:51.9px;height:18px;">nmTpXNW</div>
<div class="c j" style="left:927.9px;top:330.9px;width:52.9px;height:18px;">なし</div>
<div class="c l d" style="left:27.8px;top:348.9px;width:65.2px;height:18px;">2020/12/16</div>
<div class="c j" style="left:95.5px;top:348.9px;width:52.6px;height:18px;">食費</div>
<div class="c r" style="left:540px;top:348.9px;width:48.8px;height:18px;">1</div>
<div class="c r" style="left:595.8px;top:348.9px;width:48.2px;height:18px;">0</div>
<div class="c j" style="left:651px;top:348.9px;width:52.8px;height:18px;">食費</div>
<div class="c j" style="left:706.3px;top:348.9px;width:53.1px;height:18px;">食料品</div>
<div class="c r" style="left:761.9px;top:348.9px;width:48.2px;height:18px;">-327</div>
<div class="c r" style="left:817.1px;top:348.9px;width:48.4px;height:18px;">0</div>
<div class="c l" style="left:873.5px;top:348.9px;width:51.9px;height:18px;">SAG8zSEC</div>
<div class="c j" style="left:927.9px;top:348.9px;width:52.9px;height:18px;">なし</div>
<div class="c l d" style="left:27.8px;top:366.9px;width:65.2px;height:18px;">2020/12/15</div>
<div class="c j" style="left:95.5px;top:366.9px;width:52.6px;height:18px;">食費</div>
<div class="c r" style="left:540px;top:366.9px;width:48.8px;height:18px;">1</div>
<div class="c r" style="left:595.8px;top:366.9px;width:48.2px;height:18px;">0</div>
<div class="c j" style="left:651px;top:366.9px;width:52.8px;height:18px;">食費</div>
<div class="c j" style="left:706.3px;top:366.9px;width:53.1px;height:18px;">食料品</div>
<div class="c r" style="left:761.9px;top:366.9px;width:48.2px;height:18px;">-289</div>
<div class="c r" style="left:817.1px;top:366.9px;width:48.4px;height:18px;">0</div>
<div class="c l" style="left:873.5px;top:366.9px;width:51.9px;height:18px;">T6o_Kb24</div>
<div class="c j" style="left:927.9px;top:366.9px;width:52.9px;height:18px;">なし</div>
<div class="c l d" style="left:27.8px;top:384.9px;width:65.2px;height:18px;">2020/12/12</div>
<div class="c j" style="left:95.5px;top:384.9px;width:52.6px;height:18px;">食費</div>
<div class="c r" style="left:540px;top:384.9px;width:48.8px;height:18px;">1</div>
<div class="c r" style="left:595.8px;top:384.9px;width:48.2px;height:18px;">0</div>
<div class="c j" style="left:651px;top:384.9px;width:52.8px;height:18px;">食費</div>
<div class="c j" style="left:706.3px;top:384.9px;width:53.1px;height:18px;">食料品</div>
<div class="c r" style="left:761.9px;top:384.9px;width:48.2px;height:18px;">-1,459</div>
<div class="c r" style="left:817.1px;top:384.9px;width:48.4px;height:18px;">0</div>
<div class="c l" style="left:873.5px;top:384.9px;width:51.9px;height:18px;">ycNj-mBT</div>
<div class="c j" style="left:927.9px;top:384.9px;width:52.9px;height:18px;">なし</div>
<div class="c l d" style="left:27.8px;top:402.9px;width:65.2px;height:18px;">2020/12/11</div>
<div class="c j" style="left:95.5px;top:402.9px;width:52.6px;height:18px;">衣服・美容</div>
<div class="c r" style="left:540px;top:402.9px;width:48.8px;height:18px;">1</div>
<div class="c r" style="left:595.8px;top:402.9px;width:48.2px;height:18px;">0</div>
<div class="c j" style="left:651px;top:402.9px;width:108.4px;height:18px;">カテゴリー</div>
<div class="c r" style="left:761.9px;top:402.9px;width:48.2px;height:18px;">-1,210</div>
<div class="c r" style="left:817.1px;top:402.9px;width:48.4px;height:18px;">0</div>
<div class="c l" style="left:873.5px;top:402.9px;width:51.9px;height:18px;">62D7stLB</div>
<div class="c j" style="left:927.9px;top:402.9px;width:52.9px;height:18px;">なし</div>
<div class="c l d" style="left:27.8px;top:420.9px;width:65.2px;height:18px;">2020/12/10</div>
<div class="c j" style="left:95.5px;top:420.9px;width:52.6px;height:18px;">食費</div>
<div class="c r" style="left:540px;top:420.9px;width:48.8px;height:18px;">1</div>
<div class="c r" style="left:595.8px;top:420.9px;width:48.2px;height:18px;">0</div>
<div class="c j" style="left:651px;top:420.9px;width:108.4px;height:18px;">カテゴリー</div>
<div class="c r" style="left:761.9px;top:420.9px;width:48.2px;height:18px;">-760</div>
<div class="c r" style="left:817.1px;top:420.9px;width:48.4px;height:18px;">0</div>
<div class="c l" style="left:873.5px;top:420.9px;width:51.9px;height:18px;">OT8atJYXI</div>
<div class="c j" style="left:927.9px;top:420.9px;width:52.9px;height:18px;">なし</div>
<div class="c l d" style="left:27.8px;top:438.9px;width:65.2px;height:18px;">2020/12/10</div>
<div class="c j" style="left:95.5px;top:438.9px;width:52.6px;height:18px;">収入</div>
<div class="c r" style="left:540px;top:438.9px;width:48.8px;height:18px;">1</div>
<div class="c r" style="left:595.8px;top:438.9px;width:48.2px;height:18px;">0</div>
<div class="c j" style="left:651px;top:438.9px;width:108.4px;height:18px;">カテゴリー</div>
<div class="c r" style="left:761.9px;top:438.9px;width:48.2px;height:18px;">0</div>
<div class="c r" style="left:817.1px;top:438.9px;width:48.4px;height:18px;">900</div>
<div class="c l" style="left:873.5px;top:438.9px;width:51.9px;height:18px;">soXRONY5</div>
<div class="c j" style="left:927.9px;top:438.9px;width:52.9px;height:18px;">なし</div>
<div class="c l d" style="left:27.8px;top:456.9px;width:65.2px;height:18px;">2020/12/09</div>
<div class="c j" style="left:95.5px;top:456.9px;width:52.6px;height:18px;">交通費</div>
<div class="c r" style="left:540px;top:456.9px;width:48.8px;height:18px;">1</div>
<div class="c r" style="left:595.8px;top:456.9px;width:48.2px;height:18px;">0</div>
<div class="c j" style="left:651px;top:456.9px;width:108.4px;height:18px;">カテゴリー</div>
<div class="c r" style="left:761.9px;top:456.9px;width:48.2px;height:18px;">-420</div>
<div class="c r" style="left:817.1px;top:456.9px;width:48.4px;height:18px;">0</div>
<div class="c l" style="left:873.5px;top:456.9px;width:51.9px;height:18px;">qq35ARdp</div>
<div class="c j" style="left:927.9px;top:456.9px;width:52.9px;height:18px;">なし</div>
<div class="c l d" style="left:27.8px;top:474.9px;width:65.2px;height:18px;">2020/12/09</div>
<div class="c j" style="left:95.5px;top:474.9px;width:52.6px;height:18px;">食費</div>
<div class="c r" style="left:540px;top:474.9px;width:48.8px;height:18px;">1</div>
<div class="c r" style="left:595.8px;top:474.9px;width:48.2px;height:18px;">0</div>
<div class="c j" style="left:651px;top:474.9px;width:108.4px;height:18px;">カテゴリー</div>
<div class="c r" style="left:761.9px;top:474.9px;width:48.2px;height:18px;">-801</div>
<div class="c r" style="left:817.1px;top:474.9px;width:48.4px;height:18px;">0</div>
<div class="c l" style="left:873.5px;top:474.9px;width:51.9px;height:18px;">cNuxzbsU</div>
<div class="c j" style="left:927.9px;top:474.9px;width:52.9px;height:18px;">なし</div>
<div class="c l d" style="left:27.8px;top:492.9px;width:65.2px;height:18px;">2020/12/09</div>
<div class="c j" style="left:95.5px;top:492.9px;width:52.6px;height:18px;">食費</div>
<div class="c r" style="left:540px;top:492.9px;width:48.8px;height:18px;">1</div>
<div class="c r" style="left:595.8px;top:492.9px;width:48.2px;height:18px;">0</div>
<div class="c j" style="left:651px;top:492.9px;width:108.4px;height:18px;">カテゴリー</div>
<div class="c r" style="left:761.9px;top:492.9px;width:48.2px;height:18px;">-590</div>
<div class="c r" style="left:817.1px;top:492.9px;width:48.4px;height:18px;">0</div>
<div class="c l" style="left:873.5px;top:492.9px;width:51.9px;height:18px;">fFLZzLr33</div>
<div class="c j" style="left:927.9px;top:492.9px;width:52.9px;height:18px;">なし</div>
<div class="c l d" style="left:27.8px;top:510.9px;width:65.2px;height:18px;">2020/12/02</div>
<div class="c j" style="left:95.5px;top:510.9px;width:52.6px;height:18px;">食費</div>
<div class="c r" style="left:540px;top:510.9px;width:48.8px;height:18px;">1</div>
<div class="c r" style="left:595.8px;top:510.9px;width:48.2px;height:18px;">0</div>
<div class="c j" style="left:651px;top:510.9px;width:108.4px;height:18px;">カテゴリー</div>
<div class="c r" style="left:761.9px;top:510.9px;width:48.2px;height:18px;">-550</div>
<div class="c r" style="left:817.1px;top:510.9px;width:48.4px;height:18px;">0</div>
<div class="c l" style="left:873.5px;top:510.9px;width:51.9px;height:18px;">mpPan3W</div>
<div class="c j" style="left:927.9px;top:510.9px;width:52.9px;height:18px;">なし</div>
<div class="c l d" style="left:27.8px;top:528.9px;width:65.2px;height:18px;">2020/12/01</div>
<div class="c j" style="left:95.5px;top:528.9px;width:52.6px;height:18px;">収入</div>
<div class="c r" style="left:540px;top:528.9px;width:48.8px;height:18px;">1</div>
<div class="c r" style="left:595.8px;top:528.9px;width:48.2px;height:18px;">0</div>
<div class="c j" style="left:651px;top:528.9px;width:108.4px;height:18px;">カテゴリー</div>
<div class="c r" style="left:761.9px;top:528.9px;width:48.2px;height:18px;">0</div>
<div class="c r" style="left:817.1px;top:528.9px;width:48.4px;height:18px;">10,000</div>
<div class="c l" style="left:873.5px;top:528.9px;width:51.9px;height:18px;">5mauc0cw</div>
<div class="c j" style="left:927.9px;top:528.9px;width:52.9px;height:18px;">なし</div>
<div class="c l d" style="left:27.8px;top:546.9px;width:65.2px;height:18px;">2020/12/01</div>
<div class="c j" style="left:95.5px;top:546.9px;width:52.6px;height:18px;">食費</div>
<div class="c r" style="left:540px;top:546.9px;width:48.8px;height:18px;">1</div>
<div class="c r" style="left:595.8px;top:546.9px;width:48.2px;height:18px;">0</div>
<div class="c j" style="left:651px;top:546.9px;width:108.4px;height:18px;">カテゴリー</div>
<div class="c r" style="left:761.9px;top:546.9px;width:48.2px;height:18px;">-130</div>
<div class="c r" style="left:817.1px;top:546.9px;width:48.4px;height:18px;">0</div>
<div class="c l" style="left:873.5px;top:546.9px;width:51.9px;height:18px;">1HmU0JEA</div>
<div class="c j" style="left:927.9px;top:546.9px;width:52.9px;height:18px;">なし</div>
<div class="c l d" style="left:27.8px;top:564.9px;width:65.2px;height:18px;">2020/12/01</div>
<div class="c j" style="left:95.5px;top:564.9px;width:52.6px;height:18px;">交通費</div>
<div class="c j" style="left:150.6px;top:564.9px;width:52.4px;height:18px;">電車</div>
<div class="c j" style="left:205.5px;top:564.9px;width:53.4px;height:18px;">なし</div>
<div class="c r" style="left:316.6px;top:564.9px;width:49px;height:18px;">420</div>
<div class="c r" style="left:372.6px;top:564.9px;width:48.9px;height:18px;">0</div>
<div class="c r" style="left:540px;top:564.9px;width:48.8px;height:18px;">1</div>
<div class="c r" style="left:595.8px;top:564.9px;width:48.2px;height:18px;">0</div>
<div class="c j" style="left:651px;top:564.9px;width:108.4px;height:18px;">カテゴリー</div>
<div class="c r" style="left:761.9px;top:564.9px;width:48.2px;height:18px;">-420</div>
<div class="c r" style="left:817.1px;top:564.9px;width:48.4px;height:18px;">0</div>
<div class="c l" style="left:873.5px;top:564.9px;width:51.9px;height:18px;">bcM1GTr-</div>
<div class="c j" style="left:927.9px;top:564.9px;width:52.9px;height:18px;">なし</div>
<div class="c l d" style="left:27.8px;top:582.9px;width:65.2px;height:18px;">2021/01/27</div>
<div class="c j" style="left:95.5px;top:582.9px;width:52.6px;height:18px;">食費</div>
<div class="c j" style="left:150.6px;top:582.9px;width:52.4px;height:18px;">食費</div>
<div class="c j" style="left:205.5px;top:582.9px;width:53.4px;height:18px;">なし</div>
<div class="c r" style="left:316.6px;top:582.9px;width:49px;height:18px;">1,483</div>
<div class="c r" style="left:372.6px;top:582.9px;width:48.9px;height:18px;">0</div>
<div class="c r" style="left:540px;top:582.9px;width:48.8px;height:18px;">1</div>
<div class="c r" style="left:595.8px;top:582.9px;width:48.2px;height:18px;">0</div>
<div class="c j" style="left:651px;top:582.9px;width:108.4px;height:18px;">カテゴリー</div>
<div class="c r" style="left:761.9px;top:582.9px;width:48.2px;height:18px;">-1,483</div>
<div class="c r" style="left:817.1px;top:582.9px;width:48.4px;height:18px;">0</div>
<div class="c l" style="left:873.5px;top:582.9px;width:51.9px;height:18px;">VPPHJq73</div>
<div class="c j" style="left:927.9px;top:582.9px;width:52.9px;height:18px;">なし</div>
<div class="c l d" style="left:27.8px;top:600.9px;width:65.2px;height:18px;">2021/01/27</div>
<div class="c j" style="left:95.5px;top:600.9px;width:52.6px;height:18px;">食費</div>
<div class="c j" style="left:150.6px;top:600.9px;width:52.4px;height:18px;">食費</div>
<div class="c j" style="left:205.5px;top:600.9px;width:53.4px;height:18px;">なし</div>
<div class="c r" style="left:316.6px;top:600.9px;width:49px;height:18px;">100</div>
<div class="c r" style="left:372.6px;top:600.9px;width:48.9px;height:18px;">0</div>
<div class="c r" style="left:540px;top:600.9px;width:48.8px;height:18px;">1</div>
<div class="c r" style="left:595.8px;top:600.9px;width:48.2px;height:18px;">0</div>
<div class="c j" style="left:651px;top:600.9px;width:108.4px;height:18px;">カテゴリー</div>
<div class="c r" style="left:761.9px;top:600.9px;width:48.2px;height:18px;">-100</div>
<div class="c r" style="left:817.1px;top:600.9px;width:48.4px;height:18px;">0</div>
<div class="c l" style="left:873.5px;top:600.9px;width:51.9px;height:18px;">O50WPz43</div>
<div class="c j" style="left:927.9px;top:600.9px;width:52.9px;height:18px;">なし</div>
<div class="c l d" style="left:27.8px;top:618.9px;width:65.2px;height:18px;">2021/01/26</div>
<div class="c j" style="left:95.5px;top:618.9px;width:52.6px;height:18px;">食費</div>
<div class="c j" style="left:150.6px;top:618.9px;width:52.4px;height:18px;">食費</div>
<div class="c j" style="left:205.5px;top:618.9px;width:53.4px;height:18px;">なし</div>
<div class="c r" style="left:316.6px;top:618.9px;width:49px;height:18px;">550</div>
<div class="c r" style="left:372.6px;top:618.9px;width:48.9px;height:18px;">0</div>
<div class="c r" style="left:540px;top:618.9px;width:48.8px;height:18px;">1</div>
<div class="c r" style="left:595.8px;top:618.9px;width:48.2px;height:18px;">0</div>
<div class="c j" style="left:651px;top:618.9px;width:108.4px;height:18px;">カテゴリー</div>
<div class="c r" style="left:761.9px;top:618.9px;width:48.2px;height:18px;">-550</div>
<div class="c r" style="left:817.1px;top:618.9px;width:48.4px;height:18px;">0</div>
<div class="c l" style="left:873.5px;top:618.9px;width:51.9px;height:18px;">90d78A6S</div>
<div class="c j" style="left:927.9px;top:618.9px;width:52.9px;height:18px;">なし</div>
<div class="c l d" style="left:27.8px;top:636.9px;width:65.2px;height:13.1px;">2021/01/26</div>
<div class="c j" style="left:95.5px;top:636.9px;width:52.6px;height:13.1px;">交通費</div>
<div class="c j" style="left:150.6px;top:636.9px;width:52.4px;height:13.1px;">電車</div>
<div class="c j" style="left:205.5px;top:636.9px;width:53.4px;height:13.1px;">なし</div>
<div class="c r" style="left:316.6px;top:636.9px;width:49px;height:13.1px;">420</div>
<div class="c r" style="left:372.6px;top:636.9px;width:48.9px;height:13.1px;">0</div>
<div class="c r" style="left:540px;top:636.9px;width:48.8px;height:13.1px;">1</div>
<div class="c r" style="left:595.8px;top:636.9px;width:48.2px;height:13.1px;">0</div>
<div class="c j" style="left:651px;top:636.9px;width:108.4px;height:13.1px;">カテゴリー</div>
<div class="c r" style="left:761.9px;top:636.9px;width:48.2px;height:13.1px;">-420</div>
<div class="c r" style="left:817.1px;top:636.9px;width:48.4px;height:13.1px;">0</div>
<div class="c l" style="left:873.5px;top:636.9px;width:51.9px;height:13.1px;">aiihM8PbF</div>
<div class="c j" style="left:927.9px;top:636.9px;width:52.9px;height:13.1px;">なし</div>
<div style="left:0px;top:147px;width:1263px;height:20px;background:#fff"></div>
<div style="left:0px;top:166px;width:1263px;height:1px;background:#c6c6c6"></div>
<div style="left:203px;top:147px;width:55.9px;height:19px;background:#e1e1e1"></div>
<div style="left:203px;top:165px;width:55.9px;height:2px;background:#217346"></div>
<div class="ch" style="left:25.3px;top:147px;width:67.7px;">A</div>
<div style="left:92px;top:150px;width:1px;height:17px;background:#d0d0d0"></div>
<div class="ch" style="left:93px;top:147px;width:55.1px;">B</div>
<div style="left:147.1px;top:150px;width:1px;height:17px;background:#d0d0d0"></div>
<div class="ch" style="left:148.1px;top:147px;width:54.9px;">C</div>
<div style="left:202px;top:150px;width:1px;height:17px;background:#d0d0d0"></div>
<div class="ch" style="left:203px;top:147px;width:55.9px;color:#217346;font-weight:bold">D</div>
<div style="left:257.9px;top:150px;width:1px;height:17px;background:#d0d0d0"></div>
<div class="ch" style="left:258.9px;top:147px;width:55.2px;">E</div>
<div style="left:313.1px;top:150px;width:1px;height:17px;background:#d0d0d0"></div>
<div class="ch" style="left:314.1px;top:147px;width:56px;">F</div>
<div style="left:369.1px;top:150px;width:1px;height:17px;background:#d0d0d0"></div>
<div class="ch" style="left:370.1px;top:147px;width:55.9px;">G</div>
<div style="left:425px;top:150px;width:1px;height:17px;background:#d0d0d0"></div>
<div class="ch" style="left:426px;top:147px;width:55.7px;">H</div>
<div style="left:480.7px;top:150px;width:1px;height:17px;background:#d0d0d0"></div>
<div class="ch" style="left:481.7px;top:147px;width:55.8px;">I</div>
<div style="left:536.5px;top:150px;width:1px;height:17px;background:#d0d0d0"></div>
<div class="ch" style="left:537.5px;top:147px;width:55.8px;">J</div>
<div style="left:592.3px;top:150px;width:1px;height:17px;background:#d0d0d0"></div>
<div class="ch" style="left:593.3px;top:147px;width:55.2px;">K</div>
<div style="left:647.5px;top:150px;width:1px;height:17px;background:#d0d0d0"></div>
<div class="ch" style="left:648.5px;top:147px;width:55.3px;">L</div>
<div style="left:702.8px;top:150px;width:1px;height:17px;background:#d0d0d0"></div>
<div class="ch" style="left:703.8px;top:147px;width:55.6px;">M</div>
<div style="left:758.4px;top:150px;width:1px;height:17px;background:#d0d0d0"></div>
<div class="ch" style="left:759.4px;top:147px;width:55.2px;">N</div>
<div style="left:813.6px;top:150px;width:1px;height:17px;background:#d0d0d0"></div>
<div class="ch" style="left:814.6px;top:147px;width:55.4px;">O</div>
<div style="left:869px;top:150px;width:1px;height:17px;background:#d0d0d0"></div>
<div class="ch" style="left:870px;top:147px;width:55.4px;">P</div>
<div style="left:924.4px;top:150px;width:1px;height:17px;background:#d0d0d0"></div>
<div class="ch" style="left:925.4px;top:147px;width:55.4px;">Q</div>
<div style="left:979.8px;top:150px;width:1px;height:17px;background:#d0d0d0"></div>
<div class="ch" style="left:980.8px;top:147px;width:55.4px;">R</div>
<div style="left:1035.2px;top:150px;width:1px;height:17px;background:#d0d0d0"></div>
<div class="ch" style="left:1036.2px;top:147px;width:55.3px;">S</div>
<div style="left:1090.5px;top:150px;width:1px;height:17px;background:#d0d0d0"></div>
<div class="ch" style="left:1091.5px;top:147px;width:55.5px;">T</div>
<div style="left:1146px;top:150px;width:1px;height:17px;background:#d0d0d0"></div>
<div class="ch" style="left:1147px;top:147px;width:55.5px;">U</div>
<div style="left:1201.5px;top:150px;width:1px;height:17px;background:#d0d0d0"></div>
<div class="ch" style="left:1202.5px;top:147px;width:55.3px;">V</div>
<div style="left:1256.8px;top:150px;width:1px;height:17px;background:#d0d0d0"></div>
<div style="left:0px;top:167px;width:25px;height:483px;background:#fff"></div>
<div style="left:24px;top:167px;width:1px;height:483px;background:#c6c6c6"></div>
<div style="left:0px;top:167px;width:24px;height:19px;background:#e1e1e1"></div>
<div style="left:23px;top:167px;width:2px;height:19px;background:#217346"></div>
<div class="rh" style="top:167px;height:19px;line-height:19px;color:#217346;font-weight:bold">1</div>
<div style="left:0px;top:185px;width:24px;height:1px;background:#dcdcdc"></div>
<div class="rh" style="top:186.3px;height:18.6px;line-height:18.6px;">2</div>
<div style="left:0px;top:203.9px;width:24px;height:1px;background:#dcdcdc"></div>
<div class="rh" style="top:204.9px;height:18px;line-height:18px;">3</div>
<div style="left:0px;top:221.9px;width:24px;height:1px;background:#dcdcdc"></div>
<div class="rh" style="top:222.9px;height:18px;line-height:18px;">4</div>
<div style="left:0px;top:239.9px;width:24px;height:1px;background:#dcdcdc"></div>
<div class="rh" style="top:240.9px;height:18px;line-height:18px;">5</div>
<div style="left:0px;top:257.9px;width:24px;height:1px;background:#dcdcdc"></div>
<div class="rh" style="top:258.9px;height:18px;line-height:18px;">6</div>
<div style="left:0px;top:275.9px;width:24px;height:1px;background:#dcdcdc"></div>
<div class="rh" style="top:276.9px;height:18px;line-height:18px;">7</div>
<div style="left:0px;top:293.9px;width:24px;height:1px;background:#dcdcdc"></div>
<div class="rh" style="top:294.9px;height:18px;line-height:18px;">8</div>
<div style="left:0px;top:311.9px;width:24px;height:1px;background:#dcdcdc"></div>
<div class="rh" style="top:312.9px;height:18px;line-height:18px;">9</div>
<div style="left:0px;top:329.9px;width:24px;height:1px;background:#dcdcdc"></div>
<div class="rh" style="top:330.9px;height:18px;line-height:18px;">10</div>
<div style="left:0px;top:347.9px;width:24px;height:1px;background:#dcdcdc"></div>
<div class="rh" style="top:348.9px;height:18px;line-height:18px;">11</div>
<div style="left:0px;top:365.9px;width:24px;height:1px;background:#dcdcdc"></div>
<div class="rh" style="top:366.9px;height:18px;line-height:18px;">12</div>
<div style="left:0px;top:383.9px;width:24px;height:1px;background:#dcdcdc"></div>
<div class="rh" style="top:384.9px;height:18px;line-height:18px;">13</div>
<div style="left:0px;top:401.9px;width:24px;height:1px;background:#dcdcdc"></div>
<div class="rh" style="top:402.9px;height:18px;line-height:18px;">14</div>
<div style="left:0px;top:419.9px;width:24px;height:1px;background:#dcdcdc"></div>
<div class="rh" style="top:420.9px;height:18px;line-height:18px;">15</div>
<div style="left:0px;top:437.9px;width:24px;height:1px;background:#dcdcdc"></div>
<div class="rh" style="top:438.9px;height:18px;line-height:18px;">16</div>
<div style="left:0px;top:455.9px;width:24px;height:1px;background:#dcdcdc"></div>
<div class="rh" style="top:456.9px;height:18px;line-height:18px;">17</div>
<div style="left:0px;top:473.9px;width:24px;height:1px;background:#dcdcdc"></div>
<div class="rh" style="top:474.9px;height:18px;line-height:18px;">18</div>
<div style="left:0px;top:491.9px;width:24px;height:1px;background:#dcdcdc"></div>
<div class="rh" style="top:492.9px;height:18px;line-height:18px;">19</div>
<div style="left:0px;top:509.9px;width:24px;height:1px;background:#dcdcdc"></div>
<div class="rh" style="top:510.9px;height:18px;line-height:18px;">20</div>
<div style="left:0px;top:527.9px;width:24px;height:1px;background:#dcdcdc"></div>
<div class="rh" style="top:528.9px;height:18px;line-height:18px;">21</div>
<div style="left:0px;top:545.9px;width:24px;height:1px;background:#dcdcdc"></div>
<div class="rh" style="top:546.9px;height:18px;line-height:18px;">22</div>
<div style="left:0px;top:563.9px;width:24px;height:1px;background:#dcdcdc"></div>
<div class="rh" style="top:564.9px;height:18px;line-height:18px;">23</div>
<div style="left:0px;top:581.9px;width:24px;height:1px;background:#dcdcdc"></div>
<div class="rh" style="top:582.9px;height:18px;line-height:18px;">24</div>
<div style="left:0px;top:599.9px;width:24px;height:1px;background:#dcdcdc"></div>
<div class="rh" style="top:600.9px;height:18px;line-height:18px;">25</div>
<div style="left:0px;top:617.9px;width:24px;height:1px;background:#dcdcdc"></div>
<div class="rh" style="top:618.9px;height:18px;line-height:18px;">26</div>
<div style="left:0px;top:635.9px;width:24px;height:1px;background:#dcdcdc"></div>
<div class="rh" style="top:636.9px;height:13.1px;line-height:18px;">27</div>
<div style="left:0px;top:653.9px;width:24px;height:1px;background:#dcdcdc"></div>
<svg style="left:8px;top:151px" width="14" height="14"><path d="M13 1V13H1Z" fill="#c8c8c8"/></svg>
<div style="left:202px;top:166px;width:56.9px;height:20px;border:1.5px solid #217346;box-sizing:border-box"></div>
<div style="left:256.4px;top:183.5px;width:3px;height:3px;background:#217346;border:1px solid #fff;box-sizing:content-box"></div>
<div style="left:0px;top:650px;width:1280px;height:18.5px;background:#f4f4f4"></div>
<div style="left:0px;top:650px;width:1263px;height:1px;background:#c6c6c6"></div>
<svg style="left:18px;top:655px" width="5" height="8"><path d="M5 0v8L.5 4Z" fill="#c8c8c8"/></svg>
<svg style="left:36px;top:655px" width="5" height="8"><path d="M0 0v8L4.500 4Z" fill="#c8c8c8"/></svg>
<div style="left:67.5px;top:650px;width:58px;height:16.8px;background:#fff;border-bottom:2px solid #217346;box-sizing:border-box"></div>
<div class="t" style="left:67.5px;top:650px;width:58px;height:16px;line-height:16px;text-align:center;color:#217346;font-size:12.500px">Sheet1</div>
<div class="t" style="left:130px;top:650px;width:84px;height:16px;line-height:16px;text-align:center;color:#444;font-size:12.500px">Zaim変換<span class="k" style="transform:scaleX(0.680);margin-right:-12.00px">リスト</span></div>
<div style="left:219px;top:653px;width:1px;height:13px;background:#c0c0c0"></div>
<div class="t" style="left:226px;top:650px;width:104px;height:16px;line-height:16px;text-align:center;color:#444;font-size:12.500px">Zaim<span class="k" style="transform:scaleX(0.660);margin-right:-34.00px">カテゴリーリスト</span></div>
<div style="left:336px;top:653px;width:1px;height:13px;background:#c0c0c0"></div>
<svg style="left:357px;top:652px" width="14" height="14"><circle cx="7" cy="7" r="6" fill="#fff" stroke="#777" stroke-width="1"/><path d="M4 7h6M7 4v6" stroke="#555" stroke-width="1.200"/></svg>
<div style="left:765.5px;top:655px;width:1.2px;height:1.2px;background:#999"></div>
<div style="left:765.5px;top:658.5px;width:1.2px;height:1.2px;background:#999"></div>
<div style="left:765.5px;top:662px;width:1.2px;height:1.2px;background:#999"></div>
<div style="left:776px;top:653.5px;width:12px;height:12.5px;background:#fff;border:1px solid #cfcfcf;box-sizing:border-box"></div>
<svg style="left:780px;top:656.500px" width="4" height="7"><path d="M4 0v7L0 3.500Z" fill="#555"/></svg>
<div style="left:790px;top:653.5px;width:385px;height:12.5px;background:#fff;border:1px solid #cfcfcf;box-sizing:border-box"></div>
<div style="left:1249px;top:653.5px;width:12px;height:12.5px;background:#fff;border:1px solid #cfcfcf;box-sizing:border-box"></div>
<svg style="left:1253.500px;top:656.500px" width="4" height="7"><path d="M0 0v7L4 3.500Z" fill="#555"/></svg>
<div style="left:1263px;top:147px;width:17px;height:503px;background:#fff"></div>
<div style="left:1263px;top:167px;width:1px;height:483px;background:#c6c6c6"></div>
<div style="left:1265px;top:148.5px;width:12.5px;height:501px;background:#f0f0f0"></div>
<div style="left:1265px;top:148.5px;width:12.5px;height:12.5px;background:#fff;border:1px solid #cfcfcf;box-sizing:border-box"></div>
<svg style="left:1268px;top:153px" width="7" height="4"><path d="M0 4h7L3.500 0Z" fill="#555"/></svg>
<div style="left:1265px;top:161px;width:12.5px;height:112.5px;background:#fff;border:1px solid #c4c4c4;box-sizing:border-box"></div>
<div style="left:1265px;top:637.5px;width:12.5px;height:12px;background:#fff;border:1px solid #cfcfcf;box-sizing:border-box"></div>
<svg style="left:1268px;top:641.500px" width="7" height="4"><path d="M0 0h7L3.500 4Z" fill="#555"/></svg>
<div style="left:0px;top:668.5px;width:1280px;height:18.5px;background:#217346"></div>
<div class="t" style="left:5px;top:669.500px;height:16px;line-height:16px;color:#fff;font-size:11px">入力</div>
<svg style="left:58px;top:672px" width="12" height="11" viewBox="0 0 12 11"><rect x="1.500" y="2.500" width="9" height="7.500" fill="none" stroke="#e8f0ea" stroke-width="1.200"/><path d="M3.500 5.500h5M3.500 7.500h5" stroke="#e8f0ea" stroke-width=".9"/><circle cx="2.500" cy="2.500" r="2" fill="#e8f0ea"/></svg>
<svg style="left:1056px;top:672.500px" width="10" height="10" viewBox="0 0 10 10"><rect x=".5" y=".5" width="9" height="9" fill="none" stroke="#d8eadf"/><path d="M.5 3.500h9M.5 6.500h9M3.500 .5v9M6.500 .5v9" stroke="#d8eadf" stroke-width=".9"/></svg>
<svg style="left:1083px;top:672.500px" width="10" height="10" viewBox="0 0 10 10"><rect x=".5" y=".5" width="9" height="9" fill="none" stroke="#9fc7ae"/><rect x="2.500" y="2" width="5" height="6" fill="none" stroke="#9fc7ae" stroke-width=".9"/></svg>
<svg style="left:1110px;top:672.500px" width="10" height="10" viewBox="0 0 10 10"><rect x=".5" y=".5" width="9" height="9" fill="none" stroke="#d8eadf"/><path d="M1 1h3.500v4H1ZM5.500 1H9v4H5.500Z" fill="#e8f4ec"/></svg>
<div style="left:1134px;top:677.2px;width:5px;height:1px;background:#1a5c37"></div>
<div style="left:1142px;top:677.2px;width:83px;height:1px;background:#c4e0cf"></div>
<div style="left:1183px;top:674px;width:1.2px;height:7.5px;background:#d8eee0"></div>
<div style="left:1229px;top:677.2px;width:7px;height:1px;background:#1a5c37"></div>
<div style="left:1232px;top:674.2px;width:1px;height:7px;background:#1a5c37"></div>
<div class="t" style="left:1246px;top:669.500px;height:16px;line-height:16px;color:#8fc3a3;font-size:11.500px">100%</div>
<div style="left:0px;top:687px;width:1280px;height:33px;background:linear-gradient(90deg,#3a1a3c 0,#3b1a3a 40%,#3c1826 60%,#3d181b 75%,#3b1717 100%)"></div>
<div style="left:0px;top:687px;width:40.5px;height:33px;background:#2f0e33"></div>
<svg style="left:13px;top:696px" width="15" height="15" viewBox="0 0 15 15"><path d="M0 2.200L6.500 1.200V7H0ZM7.500 1L15 0V7H7.500ZM0 8H6.500V13.800L0 12.800ZM7.500 8H15V15L7.500 14Z" fill="#fff"/></svg>
<div style="left:41px;top:688px;width:286px;height:32px;background:#2e2e2e"></div>
<svg style="left:49px;top:696px" width="15" height="15" viewBox="0 0 15 15"><circle cx="9" cy="6" r="4.500" fill="none" stroke="#e8e8e8" stroke-width="1.300"/><path d="M5.800 9.200L1 14" stroke="#e8e8e8" stroke-width="1.400"/></svg>
<div class="t" style="left:74px;top:694px;height:18px;line-height:18px;color:#d4d4d4;font-size:12.5px;transform:scaleX(.83);transform-origin:0 50%">ここに入力して検索</div>
<svg style="left:260px;top:688px" width="67" height="32" viewBox="0 0 67 32"><path d="M0 32C8 24 14 20 22 22c6-7 14-11 22-9 5-4 12-3 15 0 3-1 6 0 8 1v18Z" fill="#86b86a"/><path d="M30 14c4-2 8-2 12 1l-8 6Z" fill="#6fa458"/><ellipse cx="52" cy="23" rx="16" ry="6.500" fill="#9cc8e8"/><ellipse cx="52" cy="24" rx="9" ry="3" fill="#8cbc70"/><ellipse cx="53" cy="22.500" rx="4" ry="1.800" fill="#f08aa0"/><ellipse cx="44" cy="13" rx="3" ry="1.500" fill="#f08aa0"/><ellipse cx="52" cy="12" rx="3" ry="1.500" fill="#f08aa0"/><path d="M9 4.500l24 3-1.500 15.500L6.500 19Z" fill="#cfe0f4" stroke="#e8f0fa" stroke-width="1"/><ellipse cx="19" cy="15" rx="9" ry="2.800" fill="#94c078"/><ellipse cx="21" cy="14.500" rx="4.500" ry="1.600" fill="#f090a4"/><path d="M14 21l-3 9M26 23l1 8M20 3v3" stroke="#8a6a3a" stroke-width="1.200"/><rect x="18" y="1.500" width="4" height="2.500" fill="#c8a850"/></svg>
<svg style="left:338px;top:695px" width="17" height="17"><circle cx="8.500" cy="8.500" r="6" fill="none" stroke="#fff" stroke-width="2"/></svg>
<svg style="left:378px;top:696px" width="17" height="15" viewBox="0 0 17 15"><rect x="2" y="3.500" width="8" height="8" fill="none" stroke="#fff" stroke-width="1.400"/><path d="M1 1h10M1 14h10" stroke="#fff" stroke-width="1.200"/><path d="M14 1v4M14 6.500v2M14 10v4" stroke="#fff" stroke-width="1.400"/></svg>
<svg style="left:418px;top:693px" width="22" height="22" viewBox="0 0 22 22"><circle cx="11" cy="11" r="10.500" fill="#1b74c8"/><path d="M1 9C3 2 12-1 18 4c3 3 3.500 7 1.500 9-2 1.500-6 1-6-1.500 0-1.500 1-2 .5-3.500C13 5 7 4.500 1 9Z" fill="#4cc2a4"/><path d="M21 13c-3 3-8 2.500-9.500-.5-.8-2 .3-4 .3-4C8 9 6.500 13 8.500 16.500c2 3.500 6.500 4.500 9 3 2-1.500 3.300-4 3.500-6.500Z" fill="#1457a8"/><path d="M0.600 10C3 5.500 9 4.500 12 8c-3.500-.5-6 2-5.500 5.500C4 12 2 10.500.6 10Z" fill="#2ea1dc"/></svg>
<svg style="left:460px;top:694px" width="21" height="18" viewBox="0 0 21 18"><path d="M0 1.500h7l2 2h11.500v13H0Z" fill="#f4b942"/><path d="M0 5h20.500v11.500H0Z" fill="#fbd45a"/><rect x="5" y="10" width="10.500" height="4.500" fill="#3b8ed8"/><rect x="7" y="13" width="6.500" height="3.500" fill="#fbd45a"/></svg>
<svg style="left:502px;top:692px" width="21" height="22" viewBox="0 0 21 22"><path d="M9 4c5-1 10 2 10 7s-3 8-7 9c-2 .5-2.500-1.500-4-2-2-.6-5 1.500-6.500-1C0 14 2 5.500 9 4Z" fill="#d4dce8" stroke="#8a94a4" stroke-width=".7"/><circle cx="6" cy="10" r="1.500" fill="#e04838"/><circle cx="9.500" cy="7.500" r="1.500" fill="#f0b030"/><circle cx="13.500" cy="8.500" r="1.400" fill="#58a848"/><circle cx="5" cy="14" r="1.300" fill="#3878c8"/><path d="M17.500 1L9 16l-1 2.500 2-1.700L19 2Z" fill="#c88848"/><path d="M17.500 1L19 2l1.200-2.500Z" fill="#e8c8a0"/></svg>
<svg style="left:543px;top:693px" width="22" height="21" viewBox="0 0 22 21"><ellipse cx="10.500" cy="8" rx="9.500" ry="6.500" transform="rotate(-18 10.500 8)" fill="#f4f0f0" stroke="#d87078" stroke-width="1.200"/><path d="M3 11c3 2.500 9 2 14-2" fill="none" stroke="#c85060" stroke-width="2"/><path d="M9 3l4 11M15 4L11 14" stroke="#888" stroke-width="1.300"/><circle cx="10.500" cy="17" r="2.300" fill="none" stroke="#2878d0" stroke-width="1.600"/><circle cx="15.500" cy="15.500" r="2.300" fill="none" stroke="#2878d0" stroke-width="1.600"/></svg>
<svg style="left:584px;top:693px" width="22" height="22" viewBox="0 0 22 22"><circle cx="11" cy="11" r="10.500" fill="#e33b2e"/><path d="M11 11L2 5.500A10.500 10.500 0 0 0 9.500 21.400L14 14Z" fill="#2da94f"/><path d="M11 11h10.400A10.500 10.500 0 0 1 9.500 21.400L15.500 11Z" fill="#fcc31e"/><path d="M11 11H21.400A10.500 10.500 0 0 0 20.500 6.500H11Z" fill="#e33b2e"/><circle cx="11" cy="11" r="4.800" fill="#fff"/><circle cx="11" cy="11" r="3.800" fill="#3b7de0"/></svg>
<svg style="left:626px;top:694px" width="20" height="19" viewBox="0 0 20 19"><rect x="9" y="2.500" width="10" height="14" fill="#fff" stroke="#1e7145" stroke-width="1"/><path d="M13 3v13M9 6.500h10M9 9.500h10M9 12.500h10" stroke="#1e7145" stroke-width="1.200"/><rect x="14" y="3" width="5" height="13" fill="#1e7145"/><rect x="15" y="4.500" width="3" height="10" fill="#fff"/><path d="M0 2L11.500 0v19L0 17Z" fill="#1e7145"/><path d="M3 5.500L8 13.500M8 5.500L3 13.500" stroke="#fff" stroke-width="1.700"/></svg>
<div style="left:454px;top:718px;width:34px;height:2px;background:#b8a4e0"></div>
<div style="left:578px;top:718px;width:34px;height:2px;background:#b8a4e0"></div>
<div style="left:619px;top:718px;width:34px;height:2px;background:#b8a4e0"></div>
<div style="left:920.5px;top:696px;width:20.5px;height:14.5px;background:#fff"></div>
<div style="left:926.5px;top:699px;width:8.5px;height:8.5px;background:#d0101c;border-radius:50%"></div>
<div class="t" style="left:947px;top:694px;height:18px;line-height:18px;color:#fff;font-size:13px;letter-spacing:-.5px">USD/JPY</div>
<div class="t" style="left:1001px;top:694px;height:18px;line-height:18px;color:#3ea320;font-size:13px;letter-spacing:-.8px">+1.36%</div>
<svg style="left:1060px;top:699px" width="12" height="8"><path d="M1 7L6 1.500L11 7" fill="none" stroke="#fff" stroke-width="1.400"/></svg>
<svg style="left:1081px;top:696px" width="12" height="15" viewBox="0 0 12 15"><rect x="1.500" y="3.500" width="7" height="8" rx="1.500" fill="none" stroke="#fff" stroke-width="1.200"/><path d="M8.500 6.500L11 5v5l-2.500-1.500" fill="none" stroke="#fff"/><path d="M2 1.500c2-1 4-1 6 0M2 13.500c2 1 4 1 6 0" fill="none" stroke="#fff" stroke-width=".9"/></svg>
<svg style="left:1099px;top:699px" width="15" height="10" viewBox="0 0 15 10"><rect x="2" y="2" width="11.500" height="6.500" fill="#fff"/><rect x="13.500" y="4" width="1.500" height="2.500" fill="#fff"/><path d="M0 1h3v2H0Z" fill="#fff"/></svg>
<svg style="left:1121px;top:698px" width="13" height="12" viewBox="0 0 13 12"><path d="M1 11A10 10 0 0 1 11 1M3.800 11A7.200 7.200 0 0 1 11 3.800M6.600 11A4.400 4.400 0 0 1 11 6.600" fill="none" stroke="#e8e8e8" stroke-width="1.100"/><circle cx="10.500" cy="10.500" r="1.200" fill="#fff"/></svg>
<svg style="left:1138px;top:698px" width="15" height="12" viewBox="0 0 15 12"><path d="M1 4.200h2.500L6.500 1.500v9L3.500 7.800H1Z" fill="none" stroke="#fff" stroke-width="1"/><path d="M8.500 4c1 1 1 3 0 4M10.500 2.500c2 2 2 5 0 7M12.500 1c3 3 3 7 0 10" fill="none" stroke="#fff" stroke-width=".9"/></svg>
<div class="t" style="left:1159px;top:693px;width:14px;height:22px;line-height:22px;color:#fff;font-size:18px;text-align:center">A</div>
<div class="t" style="left:1175px;top:688.500px;width:60px;height:14px;line-height:14px;color:#fff;font-size:10.5px;text-align:center">21:00</div>
<div class="t" style="left:1175px;top:704px;width:60px;height:14px;line-height:14px;color:#fff;font-size:10.5px;text-align:center">2022/11/14</div>
<svg style="left:1245px;top:696px" width="22" height="21" viewBox="0 0 22 21"><path d="M1 1h13v10H5l-2.500 2.500V11H1Z" fill="#fff"/><path d="M3 3.500h9M3 6h9M3 8.500h9" stroke="#3b1717" stroke-width=".9"/><circle cx="14.500" cy="13.500" r="6" fill="#2a1212" stroke="#999" stroke-width=".8"/></svg>
<div class="t" style="left:1253.500px;top:702px;width:12px;height:14px;line-height:14px;color:#fff;font-size:10px;font-weight:bold;text-align:center">3</div>
<div style="left:1276.5px;top:687px;width:1px;height:33px;background:#6a5050"></div>
<div style="left:151px;top:224.5px;width:400px;height:342px;background:#f0f0f0;border:1px solid #9a9a9a;box-sizing:border-box;box-shadow:0 1px 8px rgba(0,0,0,.28)"></div>
<div style="left:152px;top:225.5px;width:398px;height:20.5px;background:#fff"></div>
<div class="t" style="left:154.5px;top:227px;height:16px;line-height:16px;color:#000;font-size:10.5px;"><span class="k" style="transform:scaleX(0.720);margin-right:-8.82px">マクロ</span></div>
<div class="t" style="left:487px;top:226.5px;height:16px;line-height:16px;color:#000;font-size:12px;width:10px;text-align:center;">?</div>
<svg style="left:525.500px;top:229.500px" width="11" height="11"><path d="M.7 .7l9.600 9.600M10.300 .7L.7 10.300" stroke="#222" stroke-width="1.100"/></svg>
<div class="t" style="left:157.5px;top:251px;height:16px;line-height:16px;color:#000;font-size:10.5px;"><span class="k" style="transform:scaleX(0.720);margin-right:-8.82px">マクロ</span>名(<u>M</u>):</div>
<div style="left:157px;top:268px;width:298px;height:19px;background:#fff;border:1px solid #8c8c8c;box-sizing:border-box"></div>
<div style="left:160px;top:271px;width:20px;height:13px;background:#c8c8c8"></div>
<div class="t" style="left:160.5px;top:269.5px;height:16px;line-height:16px;color:#000;font-size:10px;">ACF</div>
<svg style="left:437.500px;top:268.500px" width="17" height="18" viewBox="0 0 17 18"><rect x=".5" y=".5" width="16" height="17" fill="#e8e8e8" stroke="#b0b0b0"/><rect x="3" y="3.500" width="11" height="11" fill="#fff" stroke="#8aa0c0" stroke-width=".8"/><path d="M3 7h11M3 10.500h11M6.500 3.500v11M10.500 3.500v11" stroke="#9ab0d0" stroke-width=".8"/><path d="M8 5l5 2.500-2 3.500-3.500-2Z" fill="#d83020"/></svg>
<div style="left:157px;top:286.5px;width:298px;height:155px;background:#fff;border:1px solid #8c8c8c;box-sizing:border-box"></div>
<div style="left:441px;top:287.5px;width:13px;height:153px;background:#f0f0f0"></div>
<svg style="left:443.500px;top:293px" width="8" height="5"><path d="M.5 4.500L4 1l3.500 3.500" fill="none" stroke="#b0b0b0" stroke-width="1"/></svg>
<svg style="left:443.500px;top:431px" width="8" height="5"><path d="M.5 .5L4 4l3.500-3.500" fill="none" stroke="#b0b0b0" stroke-width="1"/></svg>
<div style="left:158px;top:288.5px;width:282.5px;height:13px;background:#0078d7"></div>
<div class="t" style="left:160.5px;top:287px;height:16px;line-height:16px;color:#fff;font-size:10px;">ACF</div>
<div class="t" style="left:160.5px;top:300.5px;height:16px;line-height:16px;color:#000;font-size:10px;">MFF</div>
<div style="left:464.5px;top:268.5px;width:79.5px;height:21.5px;background:#e5f1fb;border:1px solid #0078d7;box-sizing:border-box"></div>
<div class="t" style="left:464.5px;top:268.5px;width:79.5px;height:21.5px;line-height:20.5px;text-align:center;color:#000;font-size:10.5px">実行(<u>R</u>)</div>
<div style="left:464.5px;top:297px;width:79.5px;height:21px;background:#e1e1e1;border:1px solid #adadad;box-sizing:border-box"></div>
<div class="t" style="left:464.5px;top:297px;width:79.5px;height:21px;line-height:20px;text-align:center;color:#000;font-size:10.5px"><span class="k" style="transform:scaleX(0.720);margin-right:-11.76px">ステップ</span> <span class="k" style="transform:scaleX(0.720);margin-right:-5.88px">イン</span>(<u>S</u>)</div>
<div style="left:464.5px;top:325.5px;width:79.5px;height:21px;background:#e1e1e1;border:1px solid #adadad;box-sizing:border-box"></div>
<div class="t" style="left:464.5px;top:325.5px;width:79.5px;height:21px;line-height:20px;text-align:center;color:#000;font-size:10.5px">編集(<u>E</u>)</div>
<div style="left:464.5px;top:354px;width:79.5px;height:21px;background:#cfcfcf;border:1px solid #c4c4c4;box-sizing:border-box"></div>
<div class="t" style="left:464.5px;top:354px;width:79.5px;height:21px;line-height:20px;text-align:center;color:#a8a8a8;font-size:10.5px">作成(<u>C</u>)</div>
<div style="left:464.5px;top:382.5px;width:79.5px;height:21px;background:#e1e1e1;border:1px solid #adadad;box-sizing:border-box"></div>
<div class="t" style="left:464.5px;top:382.5px;width:79.5px;height:21px;line-height:20px;text-align:center;color:#000;font-size:10.5px">削除(<u>D</u>)</div>
<div style="left:464.5px;top:411px;width:79.5px;height:21px;background:#e1e1e1;border:1px solid #adadad;box-sizing:border-box"></div>
<div class="t" style="left:464.5px;top:411px;width:79.5px;height:21px;line-height:20px;text-align:center;color:#000;font-size:10.5px"><span class="k" style="transform:scaleX(0.720);margin-right:-14.70px">オプション</span>(<u>O</u>)...</div>
<div style="left:469px;top:538px;width:75px;height:21px;background:#e1e1e1;border:1px solid #adadad;box-sizing:border-box"></div>
<div class="t" style="left:469px;top:538px;width:75px;height:21px;line-height:20px;text-align:center;color:#000;font-size:10.5px"><span class="k" style="transform:scaleX(0.720);margin-right:-14.70px">キャンセル</span></div>
<div class="t" style="left:157.5px;top:456px;height:16px;line-height:16px;color:#000;font-size:10.5px;"><span class="k" style="transform:scaleX(0.720);margin-right:-11.76px">マクロの</span>保存先(<u>A</u>):</div>
<div style="left:245.5px;top:453px;width:209.5px;height:20.5px;background:#fff;border:1px solid #adadad;box-sizing:border-box"></div>
<div style="left:441px;top:454px;width:13px;height:18.5px;background:#e1e1e1;border:1px solid #adadad;box-sizing:border-box"></div>
<svg style="left:443.500px;top:461px" width="8" height="5"><path d="M.5 .5L4 4l3.500-3.500" fill="none" stroke="#444" stroke-width="1"/></svg>
<div class="t" style="left:249px;top:455.5px;height:16px;line-height:16px;color:#000;font-size:10.5px;">開<span class="k" style="transform:scaleX(0.720);margin-right:-32.34px">いているすべてのブック</span></div>
<div class="t" style="left:157.5px;top:476.5px;height:16px;line-height:16px;color:#000;font-size:10.5px;">説明</div>
<div style="left:181px;top:484px;width:274px;height:1px;background:#dcdcdc"></div>
<div style="left:61px;top:38px;width:37px;height:55px;border:3px solid #e0101e;box-sizing:border-box"></div>
<div style="left:198px;top:163.5px;width:66.5px;height:27.5px;border:3.5px solid #e0101e;box-sizing:border-box"></div>
<div style="left:459px;top:262px;width:90.5px;height:31.5px;border:3px solid #e0101e;box-sizing:border-box"></div>
<div style="left:153px;top:286px;width:290.5px;height:18.5px;border:3px solid #e0101e;box-sizing:border-box"></div>
<div class="an" style="font-weight:400;left:60px;top:88px;width:40px;height:40px;line-height:40px;text-align:center;font-size:26.67px">②</div>
<div class="an" style="font-weight:400;left:543px;top:259px;width:40px;height:40px;line-height:40px;text-align:center;font-size:26.67px">④</div>
<div class="an" style="font-weight:400;left:122.5px;top:276.5px;width:40px;height:40px;line-height:40px;text-align:center;font-size:26.67px">③</div>
<div class="an" style="font-weight:400;left:229.2px;top:130.6px;width:40px;height:40px;line-height:40px;text-align:center;font-size:25.5px">①</div>
<div class="an" style="left:262.5px;top:129.5px;height:40px;line-height:40px;font-size:27.5px;white-space:nowrap">このセル選んでアクティブに</div>
</div></body></html>
